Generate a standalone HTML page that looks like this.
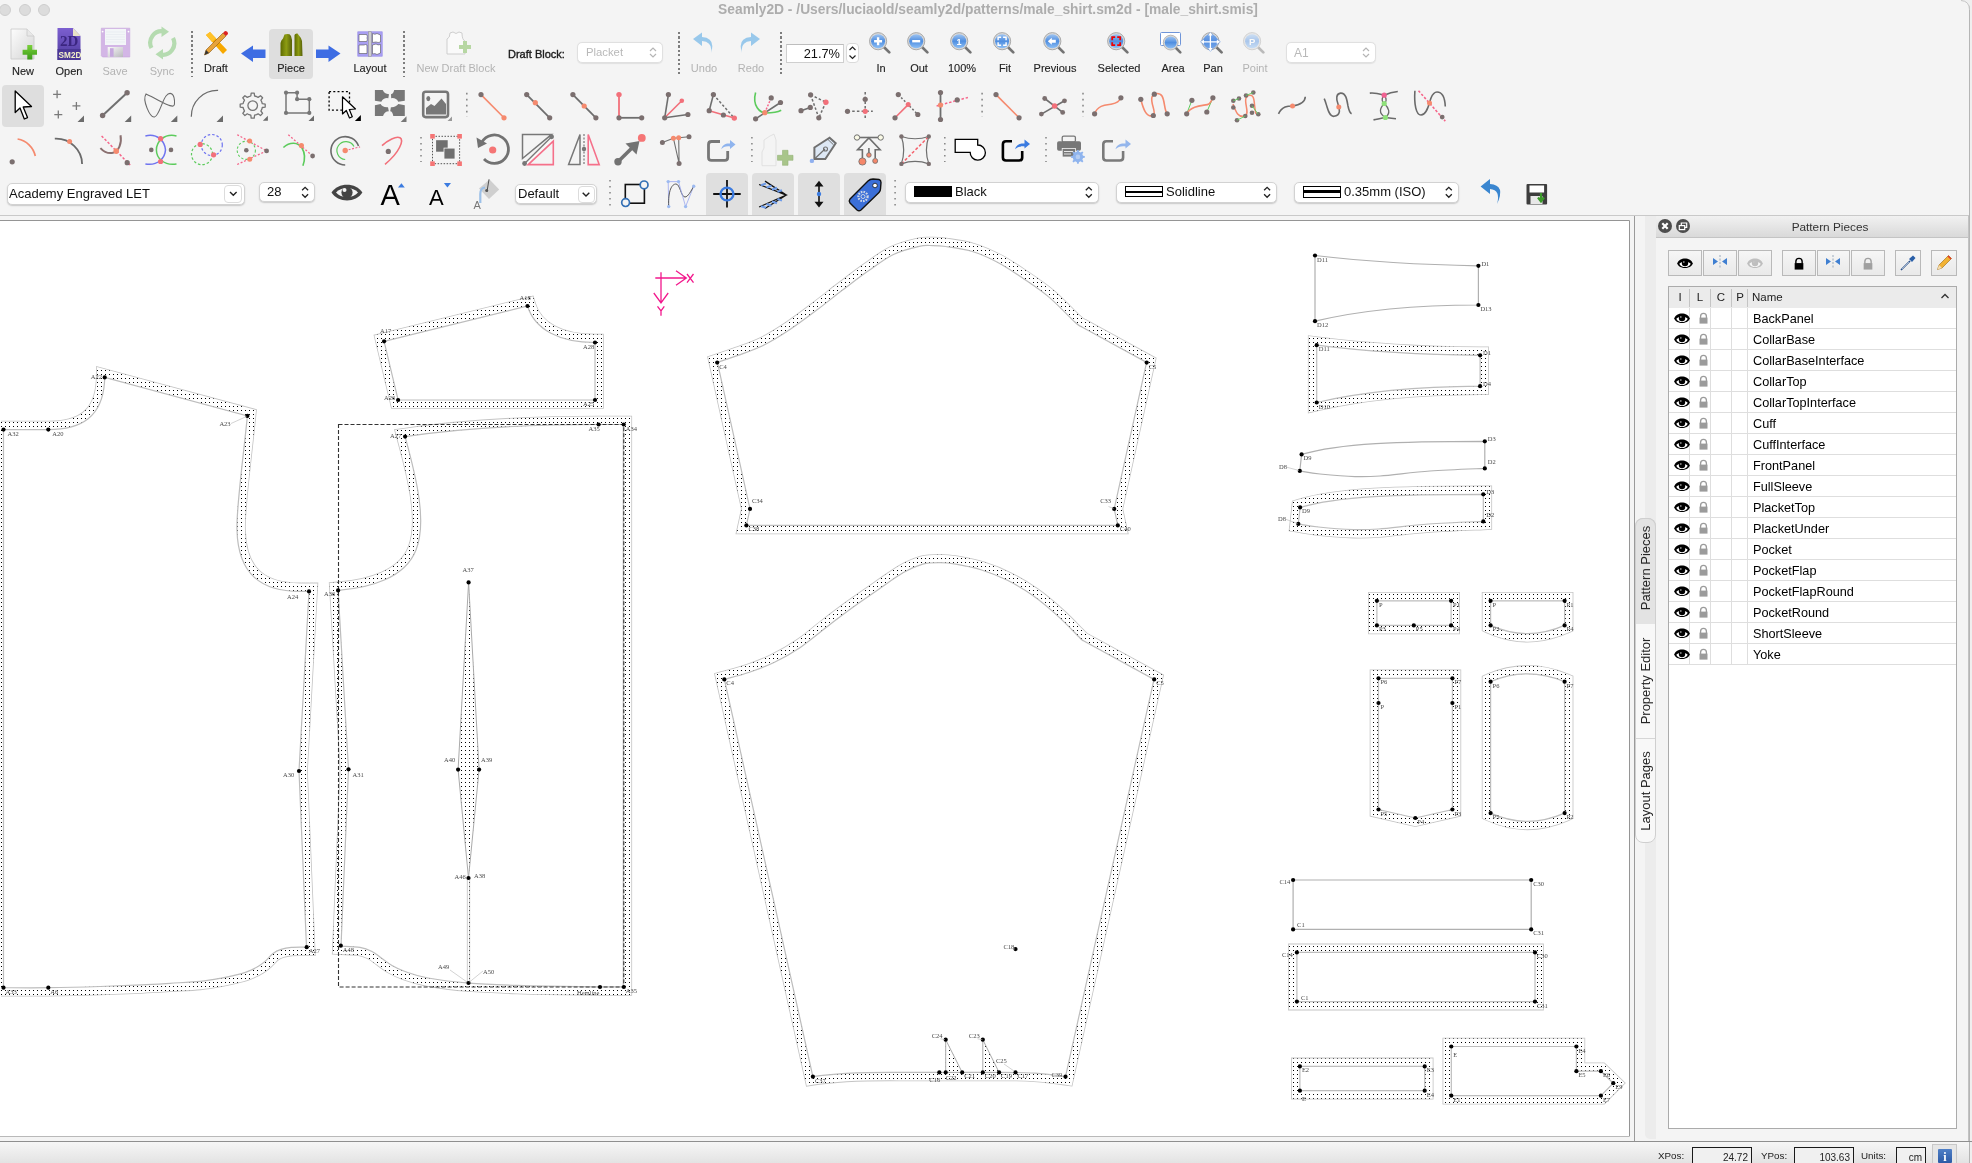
<!DOCTYPE html>
<html><head><meta charset="utf-8"><title>Seamly2D</title>
<style>
*{box-sizing:border-box;margin:0;padding:0}
html,body{width:1972px;height:1163px;overflow:hidden;background:#f4f4f4;font-family:"Liberation Sans",sans-serif;color:#1f1f1f}
.abs{position:absolute}
body>div,body>svg{will-change:transform}
.lbl{position:absolute;font-size:11px;text-align:center;white-space:nowrap;color:#262626}
.gray{color:#b4b4b4}
.sep{position:absolute;width:2px;border-left:2px dotted #8a8a8a}
.combo{position:absolute;background:#fff;border:1px solid #d6d6d6;border-radius:5px;box-shadow:0 1px 1px rgba(0,0,0,.12);font-size:13px;white-space:nowrap}
</style></head>
<body>
<div class="abs" style="left:-1px;top:4px;width:12px;height:12px;border-radius:50%;background:#dcdcdc;border:1px solid #cdcdcd"></div>
<div class="abs" style="left:18.5px;top:4px;width:12px;height:12px;border-radius:50%;background:#dcdcdc;border:1px solid #cdcdcd"></div>
<div class="abs" style="left:38px;top:4px;width:12px;height:12px;border-radius:50%;background:#dcdcdc;border:1px solid #cdcdcd"></div>
<div class="abs" style="left:0;top:2.3px;width:1972px;text-align:center;font-size:13.8px;font-weight:bold;color:#adadad;padding-left:4px">Seamly2D - /Users/luciaold/seamly2d/patterns/male_shirt.sm2d - [male_shirt.smis]</div>
<svg width="0" height="0" style="position:absolute"><defs><linearGradient id="lensg" x1="0" y1="0" x2="0" y2="1"><stop offset="0" stop-color="#9ec4f2"/><stop offset="0.5" stop-color="#4f8ee0"/><stop offset="1" stop-color="#8fc0f5"/></linearGradient><linearGradient id="pageg" x1="0" y1="0" x2="1" y2="1"><stop offset="0" stop-color="#fdfdfd"/><stop offset="1" stop-color="#d4d4d4"/></linearGradient><linearGradient id="purpg" x1="0" y1="0" x2="0" y2="1"><stop offset="0" stop-color="#7c5fd0"/><stop offset="1" stop-color="#4d3a9c"/></linearGradient><linearGradient id="greeng" x1="0" y1="0" x2="0" y2="1"><stop offset="0" stop-color="#7ad13a"/><stop offset="1" stop-color="#3a9a18"/></linearGradient><linearGradient id="oliveg" x1="0" y1="0" x2="1" y2="0"><stop offset="0" stop-color="#5d6a00"/><stop offset="0.5" stop-color="#8d9c12"/><stop offset="1" stop-color="#56600a"/></linearGradient></defs></svg>
<svg class="abs" style="left:8px;top:26px" width="32" height="36" viewBox="0 0 32 36"><path d="M3,3 H19 L26,10 V33 H3 Z" fill="url(#pageg)" stroke="#c9c9c9" stroke-width="0.8"/><path d="M19,3 V10 H26" fill="#e8e8e8" stroke="#c9c9c9" stroke-width="0.8"/><path d="M19.3,19 H24.3 V23.7 H29 V28.7 H24.3 V33.5 H19.3 V28.7 H14.6 V23.7 H19.3 Z" fill="url(#greeng)"/></svg>
<div class="abs" style="left:-27.2px;top:64.5px;width:100px;text-align:center;font-size:11px;color:#222;white-space:nowrap;-webkit-text-stroke:0.12px #222">New</div>
<svg class="abs" style="left:55px;top:26px" width="30" height="36" viewBox="0 0 30 36"><path d="M2.5,2 H18 L25.5,10 V34 H2.5 Z" fill="url(#purpg)"/><path d="M18,2 V10 H25.5 Z" fill="#e9e3c8"/><text x="5" y="20" font-family="Liberation Serif" font-weight="bold" font-size="15" fill="#3b2680">2D</text><rect x="2.5" y="23" width="23" height="11" fill="#4a3796"/><text x="3.6" y="32" font-family="Liberation Sans" font-weight="bold" font-size="8.2" fill="#f2efc8">SM2D</text></svg>
<div class="abs" style="left:19.299999999999997px;top:64.5px;width:100px;text-align:center;font-size:11px;color:#222;white-space:nowrap;-webkit-text-stroke:0.12px #222">Open</div>
<svg class="abs" style="left:100px;top:26px" width="32" height="34" viewBox="0 0 32 34"><defs><linearGradient id="shut" x1="0" y1="0" x2="1" y2="1"><stop offset="0" stop-color="#fafafa"/><stop offset="1" stop-color="#b9b9bd"/></linearGradient></defs><path d="M1.3,2.2 H29.8 V31 H2.5 L1.3,29.8 Z" fill="#d3b6e6" stroke="#c6a6dc" stroke-width="0.6"/><rect x="5" y="3" width="21" height="16" fill="#f3f6f8"/><path d="M6,6 H25 M6,8.5 H25 M6,11 H25 M6,13.5 H25 M6,16 H25" stroke="#e4eaee" stroke-width="0.6"/><circle cx="2.6" cy="5.6" r="0.9" fill="#fff"/><circle cx="28.5" cy="5.6" r="0.9" fill="#fff"/><rect x="7.7" y="21" width="15.3" height="10" fill="url(#shut)"/><rect x="10" y="22.2" width="3.6" height="8.6" fill="#c6a8de"/></svg>
<div class="abs" style="left:65.3px;top:64.5px;width:100px;text-align:center;font-size:11px;color:#b3b3b3;white-space:nowrap">Save</div>
<svg class="abs" style="left:146px;top:26px" width="32" height="34" viewBox="0 0 32 34"><path d="M5.5,22 A11.5,11.5 0 0 1 18,5.5" fill="none" stroke="#b5dbb0" stroke-width="4.2"/><path d="M15.5,0.5 L23,5.8 L15.5,11 Z" fill="#b5dbb0"/><path d="M27,12 A11.5,11.5 0 0 1 14.5,28.5" fill="none" stroke="#b5dbb0" stroke-width="4.2"/><path d="M17,23 L9.5,28.3 L17,33.5 Z" fill="#b5dbb0"/></svg>
<div class="abs" style="left:111.80000000000001px;top:64.5px;width:100px;text-align:center;font-size:11px;color:#b3b3b3;white-space:nowrap">Sync</div>
<div class="abs" style="left:191px;top:31px;width:2px;height:46px;background:repeating-linear-gradient(#7d7d7d 0 2px,transparent 2px 4.5px)"></div>
<svg class="abs" style="left:202px;top:30px" width="28" height="28" viewBox="0 0 28 28"><path d="M4,5 L8,2 L25,20 L21,24 Z" fill="#f7a800"/><path d="M4,5 L8,2 L14,8.5 L10,12Z" fill="#ffc229"/><path d="M2.5,25 L4,20 L21,3 L24,6 L7,23 Z" fill="#e7a33a" stroke="#8e5a12" stroke-width="0.6"/><path d="M21,3 L23,1 Q26,1 26,4 L24,6Z" fill="#d22"/><path d="M2.5,25 L4,20 L7,23Z" fill="#333"/></svg>
<div class="abs" style="left:166.3px;top:62px;width:100px;text-align:center;font-size:11px;color:#222;white-space:nowrap;-webkit-text-stroke:0.12px #222">Draft</div>
<svg class="abs" style="left:240px;top:45px" width="27" height="18" viewBox="0 0 27 18"><path d="M1,8.5 L13,0.5 V4.5 H25.5 V13 H13 V17 Z" fill="#3e6de3"/></svg>
<div class="abs" style="left:269px;top:29px;width:44px;height:50px;background:#dedede;border-radius:4px"></div>
<svg class="abs" style="left:278px;top:32px" width="28" height="26" viewBox="0 0 28 26"><path d="M2.5,24 V11 Q3,8 5,6.5 L6.5,2.5 Q9,1.5 11.5,2.3 L13,4 Q14.5,8 14,12 V24 Z" fill="url(#oliveg)"/><path d="M16.5,24 V3 Q17,1.2 19.5,1.5 L21,3.5 Q23.5,6 24,9 L24.5,24 Z" fill="url(#oliveg)"/></svg>
<div class="abs" style="left:240.8px;top:62px;width:100px;text-align:center;font-size:11px;color:#222;white-space:nowrap;-webkit-text-stroke:0.12px #222">Piece</div>
<svg class="abs" style="left:315px;top:45px" width="27" height="18" viewBox="0 0 27 18"><path d="M25.5,8.5 L13.5,0.5 V4.5 H1 V13 H13.5 V17 Z" fill="#3e6de3"/></svg>
<svg class="abs" style="left:356px;top:30px" width="28" height="28" viewBox="0 0 28 28"><rect x="1.8" y="1.8" width="24.4" height="24.4" fill="#a99ff3" stroke="#8d82e6" stroke-width="0.6"/><path d="M3,4.5 H10.5 Q12,6 11,8 Q12,10 10.5,11.5 H3Z" fill="#fff" stroke="#555" stroke-width="0.6"/><path d="M3,15 H8 Q9.5,14 11,15 V23.5 H3Z" fill="#fff" stroke="#555" stroke-width="0.6"/><path d="M16.5,3.5 Q19,5 21,3.5 L24.5,5 V12 Q22,13 20,12 L16.5,12.5Z" fill="#fff" stroke="#555" stroke-width="0.6"/><path d="M16.5,15 L20,14 Q22,15.5 24.5,14.5 V23 L21,24.5 Q19,23 16.5,24Z" fill="#fff" stroke="#555" stroke-width="0.6"/><rect x="12.4" y="1.8" width="3" height="24.4" fill="#cfcfcf" stroke="#8a8a8a" stroke-width="0.5"/></svg>
<div class="abs" style="left:319.7px;top:62px;width:100px;text-align:center;font-size:11px;color:#222;white-space:nowrap;-webkit-text-stroke:0.12px #222">Layout</div>
<div class="abs" style="left:403px;top:31px;width:2px;height:46px;background:repeating-linear-gradient(#7d7d7d 0 2px,transparent 2px 4.5px)"></div>
<svg class="abs" style="left:444px;top:30px" width="28" height="28" viewBox="0 0 28 28"><path d="M3,24 V9 Q6,8 6,3 L9,2 Q12,5 15,2 L18,3 Q18,10 21,11 V24 Z" fill="#fafafa" stroke="#c9c9c9" stroke-width="0.9"/><path d="M15,15 H19 V11 H23 V15 H27 V19 H23 V23 H19 V19 H15Z" fill="#b7d7a3"/></svg>
<div class="abs" style="left:405.9px;top:62px;width:100px;text-align:center;font-size:11px;color:#b3b3b3;white-space:nowrap">New Draft Block</div>
<div class="abs" style="left:508px;top:48px;font-size:11px;color:#1a1a1a;-webkit-text-stroke:0.35px #1a1a1a">Draft Block:</div>
<div class="combo" style="left:577px;top:42px;width:86px;height:21px;border-color:#e0e0e0;box-shadow:0 0.5px 1px rgba(0,0,0,.08)"></div>
<div class="abs" style="left:585.5px;top:46px;font-size:11.3px;color:#b9b9b9">Placket</div>
<svg class="abs" style="left:648px;top:45px" width="10" height="15" viewBox="0 0 10 15"><path d="M2,6 L5,3 L8,6 M2,9 L5,12 L8,9" fill="none" stroke="#b5b5b5" stroke-width="1.2"/></svg>
<div class="abs" style="left:678px;top:32px;width:2px;height:45px;background:repeating-linear-gradient(#7d7d7d 0 2px,transparent 2px 4.5px)"></div>
<svg class="abs" style="left:692px;top:32px" width="22" height="24" viewBox="0 0 22 24"><path d="M19,21 Q21,10 10,9 V14 L1,7 L10,0.5 V5 Q24,6 19,21Z" fill="#8ec3ea" opacity="0.9"/></svg>
<div class="abs" style="left:654.2px;top:62px;width:100px;text-align:center;font-size:11px;color:#b3b3b3;white-space:nowrap">Undo</div>
<svg class="abs" style="left:739px;top:32px" width="22" height="24" viewBox="0 0 22 24"><path d="M3,21 Q1,10 12,9 V14 L21,7 L12,0.5 V5 Q-2,6 3,21Z" fill="#8ec3ea" opacity="0.9"/></svg>
<div class="abs" style="left:700.5px;top:62px;width:100px;text-align:center;font-size:11px;color:#b3b3b3;white-space:nowrap">Redo</div>
<div class="abs" style="left:780px;top:32px;width:2px;height:45px;background:repeating-linear-gradient(#7d7d7d 0 2px,transparent 2px 4.5px)"></div>
<div class="abs" style="left:786px;top:44px;width:58px;height:19px;background:#fff;border:1px solid #cfcfcf;border-top-color:#bdbdbd"></div>
<div class="abs" style="left:786px;top:46px;width:54px;text-align:right;font-size:12.8px;color:#111">21.7%</div>
<div class="abs" style="left:846px;top:43px;width:13px;height:20px;background:#fff;border:1px solid #dadada;border-radius:4px"></div>
<svg class="abs" style="left:847px;top:44px" width="11" height="18" viewBox="0 0 11 18"><path d="M2.5,6 L5.5,3 L8.5,6 M2.5,11.5 L5.5,14.5 L8.5,11.5" fill="none" stroke="#222" stroke-width="1.2"/></svg>
<div class="abs" style="left:830.6px;top:62px;width:100px;text-align:center;font-size:11px;color:#222;white-space:nowrap;-webkit-text-stroke:0.12px #222">In</div>
<div class="abs" style="left:868.7px;top:62px;width:100px;text-align:center;font-size:11px;color:#222;white-space:nowrap;-webkit-text-stroke:0.12px #222">Out</div>
<div class="abs" style="left:911.7px;top:62px;width:100px;text-align:center;font-size:11px;color:#222;white-space:nowrap;-webkit-text-stroke:0.12px #222">100%</div>
<div class="abs" style="left:954.6px;top:62px;width:100px;text-align:center;font-size:11px;color:#222;white-space:nowrap;-webkit-text-stroke:0.12px #222">Fit</div>
<div class="abs" style="left:1004.8px;top:62px;width:100px;text-align:center;font-size:11px;color:#222;white-space:nowrap;-webkit-text-stroke:0.12px #222">Previous</div>
<div class="abs" style="left:1068.7px;top:62px;width:100px;text-align:center;font-size:11px;color:#222;white-space:nowrap;-webkit-text-stroke:0.12px #222">Selected</div>
<div class="abs" style="left:1123.4px;top:62px;width:100px;text-align:center;font-size:11px;color:#222;white-space:nowrap;-webkit-text-stroke:0.12px #222">Area</div>
<div class="abs" style="left:1162.9px;top:62px;width:100px;text-align:center;font-size:11px;color:#222;white-space:nowrap;-webkit-text-stroke:0.12px #222">Pan</div>
<div class="abs" style="left:1204.6px;top:62px;width:100px;text-align:center;font-size:11px;color:#b3b3b3;white-space:nowrap">Point</div>
<svg class="abs" style="left:0;top:0" width="1400" height="80" viewBox="0 0 1400 80">
<g><path d="M883.1,46.2 L889.3000000000001,52.400000000000006" stroke="#747474" stroke-width="2.7" stroke-linecap="round"/><circle cx="878.1" cy="41.2" r="8.6" fill="#d8d8d8" stroke="#a9a9a9" stroke-width="1"/><circle cx="878.1" cy="41.2" r="7" fill="url(#lensg)"/><path d="M874.1,41.2 h8 M878.1,37.2 v8" stroke="#fff" stroke-width="2.4"/></g>
<g><path d="M921.2,46.2 L927.4000000000001,52.400000000000006" stroke="#747474" stroke-width="2.7" stroke-linecap="round"/><circle cx="916.2" cy="41.2" r="8.6" fill="#d8d8d8" stroke="#a9a9a9" stroke-width="1"/><circle cx="916.2" cy="41.2" r="7" fill="url(#lensg)"/><path d="M912.2,41.2 h8" stroke="#fff" stroke-width="2.4"/></g>
<g><path d="M964.2,46.2 L970.4000000000001,52.400000000000006" stroke="#747474" stroke-width="2.7" stroke-linecap="round"/><circle cx="959.2" cy="41.2" r="8.6" fill="#d8d8d8" stroke="#a9a9a9" stroke-width="1"/><circle cx="959.2" cy="41.2" r="7" fill="url(#lensg)"/><text x="956.5" y="44.5" font-size="9" font-weight="bold" font-family="Liberation Sans" fill="#fff">1</text></g>
<g><path d="M1007.1,46.2 L1013.3000000000001,52.400000000000006" stroke="#747474" stroke-width="2.7" stroke-linecap="round"/><circle cx="1002.1" cy="41.2" r="8.6" fill="#d8d8d8" stroke="#a9a9a9" stroke-width="1"/><circle cx="1002.1" cy="41.2" r="7" fill="url(#lensg)"/><path d="M998.1,40.2 v-3 h3 M1006.1,40.2 v-3 h-3 M998.1,42.2 v3 h3 M1006.1,42.2 v3 h-3" stroke="#fff" stroke-width="1.4" fill="none"/></g>
<g><path d="M1057.3,46.2 L1063.5,52.400000000000006" stroke="#747474" stroke-width="2.7" stroke-linecap="round"/><circle cx="1052.3" cy="41.2" r="8.6" fill="#d8d8d8" stroke="#a9a9a9" stroke-width="1"/><circle cx="1052.3" cy="41.2" r="7" fill="url(#lensg)"/><path d="M1047.8,41.2 l4,-3.5 v2 h4 v3 h-4 v2 z" fill="#fff"/></g>
<g><path d="M1121.2,46.2 L1127.4,52.400000000000006" stroke="#747474" stroke-width="2.7" stroke-linecap="round"/><circle cx="1116.2" cy="41.2" r="8.6" fill="#d8d8d8" stroke="#a9a9a9" stroke-width="1"/><circle cx="1116.2" cy="41.2" r="7" fill="url(#lensg)"/><path d="M1112.2,40.2 v-3 h3 M1120.2,40.2 v-3 h-3 M1112.2,42.2 v3 h3 M1120.2,42.2 v3 h-3" stroke="#e00" stroke-width="1.8" fill="none"/></g>
<rect x="1160.5" y="32.5" width="20" height="13" rx="1" fill="#fff" stroke="#6f95d8" stroke-width="1"/>
<path d="M1175.5,47.5 L1180.3,52.3" stroke="#747474" stroke-width="2.6" stroke-linecap="round"/><circle cx="1170.7" cy="42.6" r="7.4" fill="#d8d8d8" stroke="#a9a9a9" stroke-width="0.8"/><circle cx="1170.7" cy="42.6" r="6" fill="url(#lensg)"/>
<g><path d="M1215.4,46.2 L1221.6000000000001,52.400000000000006" stroke="#747474" stroke-width="2.7" stroke-linecap="round"/><circle cx="1210.4" cy="41.2" r="8.6" fill="#d8d8d8" stroke="#a9a9a9" stroke-width="1"/><circle cx="1210.4" cy="41.2" r="7" fill="url(#lensg)"/></g>
<path d="M1210.4,32 L1220.8,41.8 L1210.4,51.8 L1200,41.8 Z" fill="#5b8fe0" opacity="0.55"/><path d="M1210.4,34 V49.5 M1202.5,41.8 H1218.3" stroke="#fff" stroke-width="1.3"/><path d="M1208.3,35.5 L1210.4,32.3 L1212.5,35.5 Z M1208.3,48 L1210.4,51.2 L1212.5,48 Z M1204,39.7 L1200.8,41.8 L1204,43.9 Z M1216.8,39.7 L1220,41.8 L1216.8,43.9 Z" fill="#fff"/>
<g opacity="0.45"><path d="M1257.1,46.2 L1263.3,52.400000000000006" stroke="#747474" stroke-width="2.7" stroke-linecap="round"/><circle cx="1252.1" cy="41.2" r="8.6" fill="#d8d8d8" stroke="#a9a9a9" stroke-width="1"/><circle cx="1252.1" cy="41.2" r="7" fill="url(#lensg)"/><text x="1248.8999999999999" y="44.5" font-size="9.5" font-weight="bold" font-family="Liberation Sans" fill="#fff">P</text></g>
</svg>
<div class="combo" style="left:1286px;top:42px;width:90px;height:21px;border-color:#e0e0e0;box-shadow:0 0.5px 1px rgba(0,0,0,.08)"></div>
<div class="abs" style="left:1294px;top:46px;font-size:12px;color:#b9b9b9">A1</div>
<svg class="abs" style="left:1361px;top:45px" width="10" height="15" viewBox="0 0 10 15"><path d="M2,6 L5,3 L8,6 M2,9 L5,12 L8,9" fill="none" stroke="#b5b5b5" stroke-width="1.2"/></svg>
<svg class="abs" style="left:0;top:0" width="1480" height="175" viewBox="0 0 1480 175">
<rect x="2" y="85" width="42" height="42" rx="4" fill="#dedede"/>
<path d="M15.2,91 L15.2,112.5 L20,108 L24.3,119 L27.5,117.6 L23.2,107 L31.5,106.5 Z" fill="#fff" stroke="#000" stroke-width="1.3" stroke-linejoin="round"/>
<path d="M53.1,94.3 h8 M57.1,90.3 v8" stroke="#7a7a7a" stroke-width="1.3"/>
<path d="M72.4,105.9 h8 M76.4,101.9 v8" stroke="#7a7a7a" stroke-width="1.3"/>
<path d="M54.3,114.6 h8 M58.3,110.6 v8" stroke="#7a7a7a" stroke-width="1.3"/>
<path d="M77.5,121.9 L84,121.9 L84,115.4 Z" fill="#6c6c6c"/>
<path d="M102.6,115.5 L127.1,92.7" stroke="#707070" stroke-width="2" fill="none"/>
<circle cx="102.6" cy="115.5" r="2.7" fill="#7b6f6f"/>
<circle cx="127.1" cy="92.7" r="2.7" fill="#7b6f6f"/>
<path d="M124.69999999999999,121.9 L131.2,121.9 L131.2,115.4 Z" fill="#6c6c6c"/>
<path d="M146,94 C142,100 150,118 154.5,117 C159,116 162,101 166,96 C170,91 175,93 174.5,104 C174,110 163,102 146,94 Z" fill="none" stroke="#6a6a6a" stroke-width="1.1"/>
<path d="M170.8,121.9 L177.3,121.9 L177.3,115.4 Z" fill="#6c6c6c"/>
<path d="M191.3,116.7 A26,26 0 0 1 218.1,90.4" fill="none" stroke="#6a6a6a" stroke-width="1.2"/>
<path d="M216.5,121.9 L223,121.9 L223,115.4 Z" fill="#6c6c6c"/>
<path d="M262.3,103.7 L265.2,104.1 L265.2,107.1 L262.3,107.5 L261.8,109.3 L260.9,111.0 L262.6,113.4 L260.5,115.5 L258.1,113.8 L256.5,114.6 L254.6,115.2 L254.2,118.1 L251.2,118.1 L250.8,115.2 L249.0,114.7 L247.3,113.8 L244.9,115.5 L242.8,113.4 L244.5,111.0 L243.7,109.4 L243.1,107.5 L240.2,107.1 L240.2,104.1 L243.1,103.7 L243.6,101.9 L244.5,100.2 L242.8,97.8 L244.9,95.7 L247.3,97.4 L248.9,96.6 L250.8,96.0 L251.2,93.1 L254.2,93.1 L254.6,96.0 L256.4,96.5 L258.1,97.4 L260.5,95.7 L262.6,97.8 L260.9,100.2 L261.7,101.8Z" fill="none" stroke="#757575" stroke-width="1.3" stroke-linejoin="round"/><circle cx="252.7" cy="105.6" r="4.8" fill="none" stroke="#757575" stroke-width="1.3"/>
<path d="M262.9,120.7 L267.9,120.7 L267.9,115.7 Z" fill="#6c6c6c"/>
<path d="M286,92.7 L297.1,92.7 L297.1,99.2 L309.3,99.2 L309.3,112.9 L286,112.9 Z" fill="none" stroke="#777" stroke-width="1.5"/>
<circle cx="286" cy="92.7" r="2.1" fill="#777"/>
<circle cx="297.1" cy="92.7" r="2.1" fill="#777"/>
<circle cx="297.1" cy="99.2" r="2.1" fill="#777"/>
<circle cx="309.3" cy="99.2" r="2.1" fill="#777"/>
<circle cx="309.3" cy="112.9" r="2.1" fill="#777"/>
<circle cx="286" cy="112.9" r="2.1" fill="#777"/>
<path d="M308.5,121 L314,121 L314,115.5 Z" fill="#6c6c6c"/>
<rect x="329.1" y="91.6" width="20.4" height="18.6" fill="none" stroke="#000" stroke-width="1.3" stroke-dasharray="2,2.2"/>
<path d="M342.5,96.8 L342.5,114 L346.3,110.5 L349.5,118 L352.3,116.7 L349.3,109.5 L355.5,109 Z" fill="#fff" stroke="#000" stroke-width="1.2" stroke-linejoin="round"/>
<path d="M354.9,121 L360.9,121 L360.9,115 Z" fill="#000"/>
<path d="M374.9,89.9 H382.7 Q384,93.5 389,94.2 L388.3,98.2 Q383.5,97.5 381.3,101.7 L374.9,100.7 Z" fill="#777"/>
<path d="M394.2,89.9 H404.8 V100.7 L398.3,101.7 Q396,97.5 391.2,98.2 L391,94.2 Q393.5,93.5 394.2,89.9 Z" fill="#777"/>
<path d="M374.9,105.2 L380.6,104.1 Q382,107.5 388,107.2 L388.8,111.3 Q384.5,111.5 383,115.9 H374.9 Z" fill="#777"/>
<path d="M398.3,104.1 L404.8,105.2 V115.9 H393.3 Q392.5,111.5 390.2,111.3 L390.9,107.2 Q396,107.5 398.3,104.1 Z" fill="#777"/>
<path d="M400.7,122 L406.5,122 L406.5,116.2 Z" fill="#777"/>
<rect x="423.2" y="91.7" width="24.8" height="25.4" rx="2.5" fill="none" stroke="#777" stroke-width="2.6"/>
<path d="M426,114.5 V108 L431,104 L434.5,106 L441.5,98.5 L446,104 V114.5 Z" fill="#777"/><ellipse cx="428.3" cy="98.6" rx="2" ry="2.6" fill="#777"/>
<path d="M447.5,121 L452,121 L452,116.5 Z" fill="#999"/>
<path d="M466.8,92.8 V117" stroke="#8a8a8a" stroke-width="1.6" stroke-dasharray="1.6,4.4"/>
<path d="M481,94.6 L504,117.8" stroke="#f58a6e" stroke-width="1.6" fill="none"/>
<circle cx="481" cy="94.6" r="2.6" fill="#7b6f6f"/>
<circle cx="504" cy="117.8" r="2.6" fill="#f58a6e"/>
<path d="M526.7,94.6 L549.7,117.8" stroke="#6e6e6e" stroke-width="1.8" fill="none"/>
<circle cx="526.7" cy="94.6" r="2.6" fill="#7b6f6f"/>
<circle cx="549.7" cy="117.8" r="2.6" fill="#7b6f6f"/>
<circle cx="535.3" cy="102.7" r="2.6" fill="#f58a6e"/>
<path d="M572.9,94.6 L595.9,117.8" stroke="#6e6e6e" stroke-width="1.8" fill="none"/>
<circle cx="572.9" cy="94.6" r="2.6" fill="#7b6f6f"/>
<circle cx="595.9" cy="117.8" r="2.6" fill="#7b6f6f"/>
<circle cx="584.2" cy="106" r="2.6" fill="#f58a6e"/>
<path d="M619,94.6 L619,117.8" stroke="#f2707a" stroke-width="1.8" fill="none"/>
<path d="M619,117.8 L641.7,117.8" stroke="#6e6e6e" stroke-width="1.8" fill="none"/>
<circle cx="619" cy="94.6" r="2.7" fill="#f2707a"/>
<circle cx="619" cy="117.8" r="2.6" fill="#7b6f6f"/>
<circle cx="641.7" cy="117.8" r="2.6" fill="#7b6f6f"/>
<path d="M664.7,117.8 L668.4,94.6" stroke="#6e6e6e" stroke-width="1.6" fill="none"/>
<path d="M664.7,117.8 L687.9,114.5" stroke="#6e6e6e" stroke-width="1.6" fill="none"/>
<path d="M664.7,117.8 L681.8,100.8" stroke="#f2707a" stroke-width="1.6" fill="none"/>
<circle cx="668.4" cy="94.6" r="2.6" fill="#7b6f6f"/>
<circle cx="664.7" cy="117.8" r="2.6" fill="#7b6f6f"/>
<circle cx="687.9" cy="114.5" r="2.6" fill="#7b6f6f"/>
<circle cx="681.8" cy="100.8" r="2.3" fill="#f2707a"/>
<path d="M713.4,94.6 L709.2,110.7" stroke="#6e6e6e" stroke-width="1.6" fill="none"/>
<path d="M709.2,110.7 L734.3,118.1" stroke="#f2707a" stroke-width="1.6" fill="none"/>
<path d="M713.4,94.6 L734.3,118.1" stroke="#6e6e6e" stroke-width="1.5" stroke-dasharray="2.5,2" fill="none"/>
<circle cx="713.4" cy="94.6" r="2.6" fill="#7b6f6f"/>
<circle cx="709.2" cy="110.7" r="2.6" fill="#7b6f6f"/>
<circle cx="723.4" cy="115" r="2.6" fill="#7b6f6f"/>
<circle cx="734.3" cy="118.1" r="2.7" fill="#f2707a"/>
<path d="M755.6,92.5 C752,106 760,113 766,113 C772,113 778,112 781.2,110.3" fill="none" stroke="#5ccb5c" stroke-width="1.6"/>
<path d="M755.6,118.8 L780.5,102.5" stroke="#6e6e6e" stroke-width="1.6" fill="none"/>
<path d="M764.8,112.7 L771.2,97.9" stroke="#f5668a" stroke-width="1.5" stroke-dasharray="2,1.5" fill="none"/>
<circle cx="755.6" cy="118.8" r="2.6" fill="#7b6f6f"/>
<circle cx="780.5" cy="102.5" r="2.6" fill="#7b6f6f"/>
<circle cx="771.2" cy="97.9" r="2.6" fill="#7b6f6f"/>
<circle cx="764.8" cy="112.7" r="2.6" fill="#f58a6e"/>
<path d="M810.6,94.8 L825.9,102.2" stroke="#6e6e6e" stroke-width="1.5" stroke-dasharray="2.5,2" fill="none"/>
<path d="M825.9,102.2 L818.8,117.8" stroke="#6e6e6e" stroke-width="1.5" stroke-dasharray="2.5,2" fill="none"/>
<path d="M810.6,94.8 L818.8,117.8" stroke="#6e6e6e" stroke-width="1.5" stroke-dasharray="2.5,2" fill="none"/>
<path d="M801,110.7 L810.3,107.4" stroke="#6e6e6e" stroke-width="1.6" fill="none"/>
<circle cx="810.6" cy="94.8" r="2.6" fill="#7b6f6f"/>
<circle cx="818.8" cy="117.8" r="2.6" fill="#7b6f6f"/>
<circle cx="810.3" cy="107.4" r="2.6" fill="#7b6f6f"/>
<circle cx="801" cy="110.7" r="2.6" fill="#7b6f6f"/>
<circle cx="825.9" cy="102.2" r="2.7" fill="#f2707a"/>
<path d="M865.2,92 L865.2,118.5" stroke="#6e6e6e" stroke-width="1.5" stroke-dasharray="2.5,2.2" fill="none"/>
<path d="M847.5,111.3 L872.8,111.3" stroke="#6e6e6e" stroke-width="1.5" stroke-dasharray="2.5,2.2" fill="none"/>
<circle cx="847.5" cy="111.3" r="2.6" fill="#7b6f6f"/>
<circle cx="865.2" cy="99.3" r="2.6" fill="#7b6f6f"/>
<circle cx="865.2" cy="111.3" r="2.6" fill="#f2707a"/>
<path d="M898.3,94.6 L917.8,114.5" stroke="#6e6e6e" stroke-width="1.5" stroke-dasharray="2,2" fill="none"/>
<path d="M908.2,104.6 L895,117.8" stroke="#f2707a" stroke-width="1.6" fill="none"/>
<circle cx="898.3" cy="94.6" r="2.6" fill="#7b6f6f"/>
<circle cx="917.8" cy="114.5" r="2.6" fill="#7b6f6f"/>
<circle cx="895" cy="117.8" r="2.6" fill="#7b6f6f"/>
<circle cx="908.2" cy="104.6" r="2.5" fill="#f2707a"/>
<path d="M940.5,92.5 L940.5,119.5" stroke="#6e6e6e" stroke-width="1.8" fill="none"/>
<path d="M936.6,106 L967.9,97.5" stroke="#f5668a" stroke-width="1.5" stroke-dasharray="2.5,1.8" fill="none"/>
<circle cx="940.5" cy="92.5" r="2.6" fill="#7b6f6f"/>
<circle cx="940.5" cy="119.5" r="2.6" fill="#7b6f6f"/>
<circle cx="957.2" cy="99.9" r="2.6" fill="#7b6f6f"/>
<circle cx="940.5" cy="105" r="2.6" fill="#f58a6e"/>
<path d="M982.1,92.8 V117" stroke="#8a8a8a" stroke-width="1.6" stroke-dasharray="1.6,4.4"/>
<path d="M996,94.6 L1019.1,117.8" stroke="#f58a6e" stroke-width="1.6" fill="none"/>
<circle cx="996" cy="94.6" r="2.6" fill="#7b6f6f"/>
<circle cx="1019.1" cy="117.8" r="2.6" fill="#7b6f6f"/>
<path d="M1041.4,114.1 L1064.5,100.8" stroke="#6e6e6e" stroke-width="1.6" fill="none"/>
<path d="M1044.7,98.5 L1062.7,112.4" stroke="#6e6e6e" stroke-width="1.6" fill="none"/>
<circle cx="1041.4" cy="114.1" r="2.4" fill="#7b6f6f"/>
<circle cx="1064.5" cy="100.8" r="2.4" fill="#7b6f6f"/>
<circle cx="1044.7" cy="98.5" r="2.4" fill="#7b6f6f"/>
<circle cx="1062.7" cy="112.4" r="2.4" fill="#7b6f6f"/>
<circle cx="1054.6" cy="106" r="2.8" fill="#f2707a"/>
<path d="M1083,92.8 V117" stroke="#8a8a8a" stroke-width="1.6" stroke-dasharray="1.6,4.4"/>
<path d="M1094.6,113.8 C1098,104 1108,105 1112,104 C1118,103 1120,100 1120.9,97.8" fill="none" stroke="#f58a6e" stroke-width="1.6"/>
<circle cx="1094.6" cy="113.8" r="2.6" fill="#7b6f6f"/>
<circle cx="1120.9" cy="97.8" r="2.6" fill="#7b6f6f"/>
<path d="M1140.8,99.3 C1143,108 1146,118 1153.3,115.5 C1157,113 1150,103 1152,97 C1154,92 1160,93 1162,96 C1165,101 1164,110 1167.2,113.8" fill="none" stroke="#f58a6e" stroke-width="1.6"/>
<circle cx="1140.8" cy="99.3" r="2.6" fill="#7b6f6f"/>
<circle cx="1153.3" cy="115.5" r="2.6" fill="#7b6f6f"/>
<circle cx="1154.3" cy="94.2" r="2.6" fill="#7b6f6f"/>
<circle cx="1167.2" cy="113.8" r="2.6" fill="#7b6f6f"/>
<path d="M1186.7,113.8 L1191.9,100.3" stroke="#5ccb5c" stroke-width="1" fill="none"/>
<path d="M1206.8,112 L1212.9,97.8" stroke="#5ccb5c" stroke-width="1" fill="none"/>
<path d="M1186.7,113.8 C1192,104 1206,106 1209,104 C1211,102 1212,100 1212.9,97.8" fill="none" stroke="#f58a6e" stroke-width="1.6"/>
<circle cx="1186.7" cy="113.8" r="2.6" fill="#7b6f6f"/>
<circle cx="1191.9" cy="100.3" r="2.6" fill="#7b6f6f"/>
<circle cx="1206.8" cy="112" r="2.6" fill="#7b6f6f"/>
<circle cx="1212.9" cy="97.8" r="2.6" fill="#7b6f6f"/>
<path d="M1233,104 C1236,112 1238,118 1245,116 C1250,114 1244,103 1246,98 C1248,94 1252,95 1253,97 C1255,100 1254,108 1256,114" fill="none" stroke="#f58a6e" stroke-width="1.5"/>
<circle cx="1233.3" cy="100.8" r="2.3" fill="#7b6f6f"/>
<circle cx="1233.3" cy="107.5" r="2.3" fill="#7b6f6f"/>
<circle cx="1239" cy="98.5" r="2.3" fill="#7b6f6f"/>
<circle cx="1246" cy="95.5" r="2.3" fill="#7b6f6f"/>
<circle cx="1253.3" cy="92.5" r="2.3" fill="#7b6f6f"/>
<circle cx="1252" cy="105.8" r="2.3" fill="#7b6f6f"/>
<circle cx="1245.3" cy="116" r="2.3" fill="#7b6f6f"/>
<circle cx="1252" cy="112.8" r="2.3" fill="#7b6f6f"/>
<circle cx="1258.3" cy="114.2" r="2.3" fill="#7b6f6f"/>
<circle cx="1237" cy="120.2" r="2.3" fill="#7b6f6f"/>
<path d="M1233.3,100.8 L1239,98.5" stroke="#5ccb5c" stroke-width="0.9" fill="none"/>
<path d="M1246,95.5 L1253.3,92.5" stroke="#5ccb5c" stroke-width="0.9" fill="none"/>
<path d="M1237,120.2 L1245.3,116" stroke="#5ccb5c" stroke-width="0.9" fill="none"/>
<path d="M1252,105.8 L1258.3,114.2" stroke="#5ccb5c" stroke-width="0.9" fill="none"/>
<path d="M1278.5,113.8 C1282,106 1288,106 1292.5,106 C1300,105 1305,102 1305.3,96.8" fill="none" stroke="#6a6a6a" stroke-width="1.6"/>
<circle cx="1292.5" cy="106.1" r="2.5" fill="#f58a6e"/>
<path d="M1324.2,98.6 C1327,104 1328,117 1334,116.3 C1341,115.5 1340,109 1338,104 C1336,99 1336,93.5 1340.6,93.1 C1346,92.8 1347,100 1348,106 C1349,111 1350,113 1351.6,113.8" fill="none" stroke="#6a6a6a" stroke-width="1.6"/>
<circle cx="1338.8" cy="106.9" r="2.5" fill="#f58a6e"/>
<path d="M1369.8,93.1 C1376,92.5 1380,94 1384.2,95.2 C1389,93 1393,92 1397.8,91.5 M1373.5,119.9 C1378,119 1382,118 1385.4,117.5 C1389,118 1393,118.5 1396,118.7" fill="none" stroke="#6a6a6a" stroke-width="1.6"/>
<path d="M1384.2,95.2 C1381,99 1382,102 1384.2,103.5 C1386.5,102 1387,99 1384.2,95.2 M1384.2,103.5 C1380,108 1378,113 1385.4,117.5 C1391,113 1389,108 1384.2,103.5" fill="none" stroke="#6a6a6a" stroke-width="1.3"/>
<circle cx="1384.2" cy="95.2" r="2.6" fill="#f06292"/>
<circle cx="1384.2" cy="103.5" r="2.6" fill="#8fe07a"/>
<circle cx="1385.4" cy="117.5" r="2.6" fill="#8fe07a"/>
<path d="M1414.9,90.7 C1414,104 1416,115 1421,115 C1427,115 1429,104 1431,98 C1433,93 1435,92 1437,92 C1443,92 1445,100 1445.3,106.5" fill="none" stroke="#6a6a6a" stroke-width="1.6"/>
<path d="M1418.5,90.7 L1445.3,121.1" stroke="#f5668a" stroke-width="1.6" stroke-dasharray="2.5,1.8" fill="none"/>
<circle cx="1442.2" cy="117.1" r="2.4" fill="#7b6f6f"/>
<circle cx="1429.5" cy="102.9" r="2.5" fill="#f58a6e"/>
<circle cx="12.2" cy="161.8" r="2.6" fill="#7b6f6f"/>
<path d="M17.6,139 A22,22 0 0 1 35.3,156" fill="none" stroke="#f58a6e" stroke-width="1.7"/>
<path d="M54.8,138.7 C70,138 82,150 82.1,163.9" fill="none" stroke="#6a6a6a" stroke-width="1.8"/>
<circle cx="69.6" cy="141.4" r="2.5" fill="#f58a6e"/>
<path d="M100.4,148.1 C104,152 108,153.5 112,153 C119,152 122,143 120.5,135.3" fill="none" stroke="#8a7070" stroke-width="2"/>
<path d="M101.6,135.9 L130.2,165.1" stroke="#f5668a" stroke-width="1.5" stroke-dasharray="2.5,1.8" fill="none"/>
<circle cx="127.2" cy="162.7" r="2.6" fill="#7b6f6f"/>
<circle cx="116.2" cy="151.1" r="2.8" fill="#f58a6e"/>
<path d="M145.4,135.9 C158,133 165,142 165.5,149.9 C165,158 158,166 145.4,163.9" fill="none" stroke="#6f74f0" stroke-width="1.5"/>
<path d="M176.5,135.9 C164,133 156.4,142 156.4,149.9 C156.4,158 164,166 176.5,163.9" fill="none" stroke="#5ccb5c" stroke-width="1.5"/>
<circle cx="160.6" cy="138.7" r="2.6" fill="#f2707a"/>
<circle cx="160.6" cy="161.5" r="2.6" fill="#f2707a"/>
<circle cx="151.3" cy="149.9" r="2.3" fill="#7b6f6f"/>
<circle cx="171" cy="149.9" r="2.3" fill="#7b6f6f"/>
<circle cx="202" cy="154.2" r="10.5" fill="none" stroke="#5ccb5c" stroke-width="1.2" stroke-dasharray="2.5,2"/>
<circle cx="211.8" cy="145" r="10.5" fill="none" stroke="#6f74f0" stroke-width="1.2" stroke-dasharray="2.5,2"/>
<circle cx="200.2" cy="144.4" r="2.6" fill="#f2707a"/>
<circle cx="213.6" cy="154.8" r="2.6" fill="#f2707a"/>
<circle cx="246.3" cy="150.3" r="9.1" fill="none" stroke="#5ccb5c" stroke-width="1.1" stroke-dasharray="2.3,2"/>
<path d="M237.2,134.7 L266.6,150.9" stroke="#f5668a" stroke-width="1.3" stroke-dasharray="2,1.8" fill="none"/>
<path d="M237.2,164.5 L266.6,150.9" stroke="#f5668a" stroke-width="1.3" stroke-dasharray="2,1.8" fill="none"/>
<circle cx="246.3" cy="150.3" r="2.3" fill="#7b6f6f"/>
<circle cx="266.6" cy="150.9" r="2.4" fill="#7b6f6f"/>
<circle cx="249.7" cy="141.1" r="2.5" fill="#f58a6e"/>
<circle cx="249.7" cy="159.3" r="2.5" fill="#f58a6e"/>
<path d="M283.4,147.5 C290,141.5 298,142 302,148 C305,153 305,160 302.9,165.7" fill="none" stroke="#5ccb5c" stroke-width="1.6"/>
<path d="M288.3,134.7 L312.6,156" stroke="#f5668a" stroke-width="1.3" stroke-dasharray="2,1.8" fill="none"/>
<circle cx="312.6" cy="156" r="2.4" fill="#7b6f6f"/>
<circle cx="301.4" cy="145.6" r="2.6" fill="#f58a6e"/>
<path d="M358.5,146 A14.2,14.2 0 1 0 345.2,165" fill="none" stroke="#6a6a6a" stroke-width="1.6"/>
<path d="M354,146.5 A9,9 0 1 0 345.2,159.5" fill="none" stroke="#5ccb5c" stroke-width="1.2"/>
<path d="M345.2,150.5 L360.1,146.9" stroke="#f5668a" stroke-width="1.1" stroke-dasharray="2,1.5" fill="none"/>
<circle cx="345.2" cy="150.5" r="2.7" fill="#f58a6e"/>
<path d="M382,145.6 C388,140 396,136 400,137.7 C404,140 400,152 385,164.3" fill="none" stroke="#f2707a" stroke-width="1.6"/>
<circle cx="388.3" cy="151.4" r="2.6" fill="#7b6f6f"/>
<path d="M421,137 V162" stroke="#8a8a8a" stroke-width="1.6" stroke-dasharray="1.6,4.4"/>
<rect x="432.5" y="136.3" width="27.1" height="27.4" fill="none" stroke="#555" stroke-width="1" stroke-dasharray="1.5,1.5"/>
<rect x="430.2" y="134.0" width="4.6" height="4.6" fill="#f57575"/>
<rect x="457.3" y="134.0" width="4.6" height="4.6" fill="#f57575"/>
<rect x="430.2" y="161.39999999999998" width="4.6" height="4.6" fill="#f57575"/>
<rect x="457.3" y="161.39999999999998" width="4.6" height="4.6" fill="#f57575"/>
<rect x="436.1" y="140.2" width="11.6" height="11.5" fill="#6f6f6f"/><rect x="444" y="148.1" width="11" height="10.9" fill="#6f6f6f" stroke="#f4f4f4" stroke-width="0.8"/>
<path d="M482,142 A14.2,14.2 0 1 1 484,159" fill="none" stroke="#727272" stroke-width="2.8"/>
<path d="M476.5,137.5 L478,148 L487,143.5 Z" fill="#727272"/>
<circle cx="492.7" cy="150" r="3.6" fill="#f57575"/>
<path d="M522.5,134.4 H551.6 L522.5,158.5 Z" fill="none" stroke="#777" stroke-width="1.5"/>
<path d="M524.6,163.5 L551.6,136.8" stroke="#777" stroke-width="1.3" fill="none"/>
<path d="M527,163.5 L553,139" stroke="#fff" stroke-width="0.6" fill="none"/>
<circle cx="524.6" cy="163.5" r="2.4" fill="#777"/>
<circle cx="551.6" cy="136.8" r="2.4" fill="#777"/>
<path d="M528.2,164.6 L553.3,141.1 V164.6 Z" fill="none" stroke="#f5708a" stroke-width="1.6"/>
<path d="M568.6,164.6 L580,134.4 V164.6 Z" fill="none" stroke="#777" stroke-width="1.5"/>
<path d="M584,134 L584,165" stroke="#777" stroke-width="1.2" stroke-dasharray="2,1.5" fill="none"/>
<circle cx="584" cy="149" r="2.2" fill="#777"/>
<path d="M588.2,134.4 V164.6 H599.2 Z" fill="none" stroke="#f5708a" stroke-width="1.6"/>
<path d="M618,161.8 L634,146" stroke="#727272" stroke-width="3.6" fill="none"/>
<path d="M639.5,141 L625.5,143.5 L636.5,154.5 Z" fill="#727272"/>
<circle cx="618" cy="161.8" r="3.7" fill="#727272"/>
<circle cx="641.8" cy="137.9" r="3.9" fill="#f57575"/>
<path d="M662.4,142.5 L673.4,138.2 L678.7,137.7 L689,136.8 M673.4,138.2 L679.1,163.5 L678.7,137.7" fill="none" stroke="#6f6f6f" stroke-width="1.1"/>
<circle cx="662.4" cy="142.5" r="2.5" fill="#7b6f6f"/>
<circle cx="689" cy="136.8" r="2.5" fill="#7b6f6f"/>
<circle cx="679.1" cy="163.5" r="2.5" fill="#7b6f6f"/>
<circle cx="673.4" cy="138.2" r="2.5" fill="#f58a6e"/>
<circle cx="678.7" cy="137.7" r="2.5" fill="#f58a6e"/>
<path d="M720,141.5 H711.5 Q708.5,141.5 708.5,144.5 V157.4 Q708.5,160.4 711.5,160.4 H724.7 Q727.7,160.4 727.7,157.4 V151" fill="none" stroke="#777" stroke-width="2.8"/>
<path d="M721.3,149.3 C722,145 726,143 730,143.5 V140 L735.5,144.5 L730,149 V146.5 C726,146 723,147 721.3,149.3 Z" fill="#8fb4ee"/>
<path d="M751.9,137 V162" stroke="#8a8a8a" stroke-width="1.6" stroke-dasharray="1.6,4.4"/>
<path d="M762,165.7 V152 L764,148 V140 L770,136 L774,134.1 L776,140 V165.7 Z" fill="none" stroke="#dcdcdc" stroke-width="0.8"/>
<path d="M782.5,150.3 H788 V155.3 H793 V160.3 H788 V165.3 H782.5 V160.3 H777.5 V155.3 H782.5 Z" fill="#a8c58a" stroke="#96b47a" stroke-width="0.6"/>
<path d="M814.4,147.5 L829.6,137.7 L835.7,143.2 L825.3,159 L814.4,159 Z" fill="#dde8f5" stroke="#707070" stroke-width="2"/>
<path d="M815,158.5 L825,149" stroke="#707070" stroke-width="1.2"/><circle cx="825.5" cy="149" r="2" fill="none" stroke="#707070" stroke-width="1.1"/>
<path d="M828,139.5 L833.5,144.8" stroke="#707070" stroke-width="1" fill="none"/>
<circle cx="811.9" cy="160.9" r="2.2" fill="#8fb0ef"/>
<path d="M857,137.5 L880.7,137.5" stroke="#6f6f6f" stroke-width="1.6" fill="none"/>
<path d="M862.4,158 V149.7 H857.6 L868.9,138 L880.1,149.7 H875.2 V158" fill="none" stroke="#6f6f6f" stroke-width="1.6"/>
<path d="M868.9,148 L868.9,153" stroke="#6f6f6f" stroke-width="1.6" fill="none"/>
<circle cx="857" cy="137.5" r="2.7" fill="#fafae6" stroke="#6f6f6f" stroke-width="1"/><circle cx="880.7" cy="137.5" r="2.7" fill="#fafae6" stroke="#6f6f6f" stroke-width="1"/>
<circle cx="862.4" cy="161.5" r="3.6" fill="#f5876a" stroke="#6f6f6f" stroke-width="0.8"/><circle cx="875.2" cy="160.9" r="2.5" fill="#f5876a" stroke="#6f6f6f" stroke-width="0.8"/><circle cx="868.9" cy="155" r="2.3" fill="#f5876a" stroke="#6f6f6f" stroke-width="0.8"/>
<path d="M901.4,136.5 Q915,141 928.8,136.5 Q924,150 928.8,163.9 Q915,159 901.4,163.9 Q906,150 901.4,136.5 Z" fill="none" stroke="#6f6f6f" stroke-width="1.2"/>
<path d="M901.4,163.9 L928.8,136.5" stroke="#f55f6a" stroke-width="1.5" stroke-dasharray="3,2" fill="none"/>
<circle cx="901.4" cy="136.5" r="2.2" fill="#7b6f6f"/>
<circle cx="928.8" cy="136.5" r="2.2" fill="#7b6f6f"/>
<circle cx="901.4" cy="163.9" r="2.2" fill="#7b6f6f"/>
<circle cx="928.8" cy="163.9" r="2.2" fill="#7b6f6f"/>
<path d="M944.8,137 V162" stroke="#8a8a8a" stroke-width="1.6" stroke-dasharray="1.6,4.4"/>
<path d="M955.2,139.4 H977.7 V145 A7.6,7.6 0 1 1 970.2,152.3 H955.2 Z" fill="#fff" stroke="#000" stroke-width="1.3"/>
<path d="M1012,141.2 H1006 Q1002.9,141.2 1002.9,144.3 V157.4 Q1002.9,160.5 1006,160.5 H1019.1 Q1022.2,160.5 1022.2,157.4 V151" fill="none" stroke="#000" stroke-width="2.6"/>
<path d="M1015,149.3 C1016,145 1020,143 1024.5,143.5 V139.5 L1030,144 L1024.5,148.5 V146.5 C1020,146 1017,147 1015,149.3 Z" fill="#3b7be0"/>
<path d="M1046,137 V162" stroke="#8a8a8a" stroke-width="1.6" stroke-dasharray="1.6,4.4"/>
<rect x="1062.2" y="136.1" width="13.2" height="6" rx="1.5" fill="none" stroke="#777" stroke-width="1.3"/>
<rect x="1057.1" y="141.2" width="23.9" height="9.6" rx="1.8" fill="#777"/><rect x="1062.2" y="148.5" width="13.2" height="8.5" fill="#777" stroke="#f4f4f4" stroke-width="0.8"/>
<path d="M1064,151.5 H1073 M1064,154 H1071" stroke="#f4f4f4" stroke-width="0.9"/>
<path d="M1083.0,155.8 L1084.8,156.1 L1084.8,157.7 L1083.0,158.0 L1082.7,158.9 L1082.3,159.7 L1083.4,161.2 L1082.2,162.4 L1080.7,161.3 L1079.9,161.7 L1079.0,162.0 L1078.7,163.8 L1077.1,163.8 L1076.8,162.0 L1075.9,161.7 L1075.1,161.3 L1073.6,162.4 L1072.4,161.2 L1073.5,159.7 L1073.1,158.9 L1072.8,158.0 L1071.0,157.7 L1071.0,156.1 L1072.8,155.8 L1073.1,154.9 L1073.5,154.1 L1072.4,152.6 L1073.6,151.4 L1075.1,152.5 L1075.9,152.1 L1076.8,151.8 L1077.1,150.0 L1078.7,150.0 L1079.0,151.8 L1079.9,152.1 L1080.7,152.5 L1082.2,151.4 L1083.4,152.6 L1082.3,154.1 L1082.7,154.9Z" fill="#8fb4ee"/><circle cx="1077.9" cy="156.9" r="2.3" fill="#b5cdf2"/>
<path d="M1113,141.2 H1106.4 Q1103.3,141.2 1103.3,144.3 V157.4 Q1103.3,160.5 1106.4,160.5 H1120 Q1123.1,160.5 1123.1,157.4 V151" fill="none" stroke="#7a7a7a" stroke-width="2.6"/>
<path d="M1115.5,149.3 C1116.5,145 1120.5,143 1125.5,143.5 V139.5 L1131,144 L1125.5,148.5 V146.5 C1121,146 1118,147 1115.5,149.3 Z" fill="#94b6ec"/>
</svg>

<div style="position:absolute;background:#fff;border:1px solid #d2d2d2;border-radius:5px;box-shadow:0 1px 1.5px rgba(0,0,0,.18);left:7px;top:183px;width:238px;height:22px"></div>
<div class="abs" style="left:9px;top:186px;font-size:13px;color:#111;white-space:nowrap">Academy Engraved LET</div>
<div style="position:absolute;left:224px;top:185px;width:18px;height:18px;border:1px solid #dcdcdc;border-radius:4px;background:#fff"></div>
<div style="position:absolute;background:#fff;border:1px solid #d2d2d2;border-radius:5px;box-shadow:0 1px 1.5px rgba(0,0,0,.18);left:259px;top:182px;width:56px;height:20px"></div>
<div class="abs" style="left:267px;top:184px;font-size:13px;color:#111">28</div>
<div style="position:absolute;background:#fff;border:1px solid #d2d2d2;border-radius:5px;box-shadow:0 1px 1.5px rgba(0,0,0,.18);left:713px;top:172px;width:0;height:0;display:none"></div>
<svg class="abs" style="left:0;top:170px" width="1560" height="46" viewBox="0 170 1560 46">
<path d="M230,192 L233.3,195.3 L236.6,192" fill="none" stroke="#222" stroke-width="1.4"/>
<path d="M302.1,190.3 L305.1,187.3 L308.1,190.3 M302.1,194.3 L305.1,197.3 L308.1,194.3" fill="none" stroke="#222" stroke-width="1.3"/>
<path d="M331.5,192.5 C338,182 356,182 362.4,192.5 C356,203 338,203 331.5,192.5 Z" fill="#444"/>
<path d="M336,192.5 C341,186.5 353,186.5 358,192.5 C353,198.5 341,198.5 336,192.5 Z" fill="#f4f4f4"/>
<circle cx="347" cy="192.5" r="5.6" fill="#444"/><circle cx="344.5" cy="190" r="2" fill="#f4f4f4"/>
<text x="380.5" y="204.6" font-family="Liberation Sans" font-size="29" fill="#000">A</text>
<path d="M398,187.4 L401.4,183.2 L404.8,187.4 Z" fill="#3b7be0"/>
<text x="429" y="204.6" font-family="Liberation Sans" font-size="22" fill="#000">A</text>
<path d="M443.9,183 L451,183 L447.4,187.4 Z" fill="#3b7be0"/>
<path d="M479,188.5 L489.5,179.5 L499.2,189.5 L489,199 Z" fill="#cfcfcf"/>
<path d="M489,179.3 L487,191.5" stroke="#444" stroke-width="0.9"/><circle cx="486.7" cy="190.5" r="1.5" fill="#555"/>
<path d="M480.3,203 V194 Q480.3,188 485,187.5" fill="none" stroke="#9cc0e8" stroke-width="2.2"/>
<text x="473.5" y="208.6" font-family="Liberation Sans" font-size="11" fill="#777">A</text>
</svg>
<div style="position:absolute;background:#fff;border:1px solid #d2d2d2;border-radius:5px;box-shadow:0 1px 1.5px rgba(0,0,0,.18);left:514.5px;top:184px;width:82px;height:20px"></div>
<div class="abs" style="left:517.5px;top:186px;font-size:13px;color:#111">Default</div>
<div style="position:absolute;left:577.5px;top:185.5px;width:17px;height:17px;border:1px solid #dcdcdc;border-radius:4px;background:#fff"></div>
<div class="abs" style="left:706.2px;top:173px;width:41.6px;height:42px;background:#dfdfdf;border-radius:4px 4px 0 0"></div>
<div class="abs" style="left:752.2px;top:173px;width:41.6px;height:42px;background:#dfdfdf;border-radius:4px 4px 0 0"></div>
<div class="abs" style="left:798.1px;top:173px;width:41.6px;height:42px;background:#dfdfdf;border-radius:4px 4px 0 0"></div>
<div class="abs" style="left:844.1px;top:173px;width:41.6px;height:42px;background:#dfdfdf;border-radius:4px 4px 0 0"></div>
<div style="position:absolute;background:#fff;border:1px solid #d2d2d2;border-radius:5px;box-shadow:0 1px 1.5px rgba(0,0,0,.18);left:905px;top:182px;width:194px;height:20.5px"></div>
<div class="abs" style="left:914px;top:186.3px;width:38px;height:11.4px;background:#000"></div>
<div class="abs" style="left:955.3px;top:184px;font-size:13px;color:#111">Black</div>
<div style="position:absolute;background:#fff;border:1px solid #d2d2d2;border-radius:5px;box-shadow:0 1px 1.5px rgba(0,0,0,.18);left:1115.6px;top:182px;width:161px;height:20.5px"></div>
<div class="abs" style="left:1125px;top:186.3px;width:37.6px;height:11.2px;border:1px solid #000;background:#fff"></div>
<div class="abs" style="left:1126px;top:191.2px;width:35.6px;height:1.6px;background:#000"></div>
<div class="abs" style="left:1166px;top:184px;font-size:13px;color:#111">Solidline</div>
<div style="position:absolute;background:#fff;border:1px solid #d2d2d2;border-radius:5px;box-shadow:0 1px 1.5px rgba(0,0,0,.18);left:1293.7px;top:181.6px;width:165.3px;height:20.7px"></div>
<div class="abs" style="left:1303px;top:185.9px;width:38px;height:11.7px;border:1px solid #000;background:#fff"></div>
<div class="abs" style="left:1304px;top:190.3px;width:36px;height:2.8px;background:#000"></div>
<div class="abs" style="left:1343.8px;top:184px;font-size:13px;color:#111">0.35mm (ISO)</div>
<svg class="abs" style="left:0;top:170px" width="1560" height="46" viewBox="0 170 1560 46">
<path d="M610,180 V207" stroke="#8a8a8a" stroke-width="1.6" stroke-dasharray="1.6,4.4"/>
<path d="M895.1,180 V207" stroke="#8a8a8a" stroke-width="1.6" stroke-dasharray="1.6,4.4"/>
<path d="M1085.8,190.3 L1088.8,187.3 L1091.8,190.3 M1085.8,194.3 L1088.8,197.3 L1091.8,194.3" fill="none" stroke="#222" stroke-width="1.3"/>
<path d="M1264.1,190.3 L1267.1,187.3 L1270.1,190.3 M1264.1,194.3 L1267.1,197.3 L1270.1,194.3" fill="none" stroke="#222" stroke-width="1.3"/>
<path d="M1445.8,190.3 L1448.8,187.3 L1451.8,190.3 M1445.8,194.3 L1448.8,197.3 L1451.8,194.3" fill="none" stroke="#222" stroke-width="1.3"/>
<path d="M582.7,192.7 L586,196 L589.3,192.7" fill="none" stroke="#222" stroke-width="1.4"/>
<rect x="625.3" y="184.5" width="19.1" height="18.7" fill="none" stroke="#111" stroke-width="1.6"/>
<circle cx="644.1" cy="184.9" r="3.9" fill="#f4f4f4" stroke="#3470b5" stroke-width="1.7"/><circle cx="625.6" cy="202.6" r="3.9" fill="#f4f4f4" stroke="#3470b5" stroke-width="1.7"/>
<path d="M668.7,206.6 L668.2,181.6 L678.5,181.6 M685.6,206.6 L693.7,186.3 M668.7,206.6" fill="none" stroke="#9aa7f0" stroke-width="0.8"/>
<path d="M668.7,206.6 L685.6,206.6" fill="none" stroke="#9aa7f0" stroke-width="0"/>
<path d="M668.7,206.6 C668,190 672,184 676,184 C680,184 681,197 685,197 C688,197 691,191 693.7,186.3" fill="none" stroke="#555" stroke-width="1"/>
<path d="M678.5,181.6 L685.6,206.6" stroke="#9aa7f0" stroke-width="0.8"/>
<circle cx="668.2" cy="181.6" r="1.7" fill="#9dbaf0"/>
<circle cx="678.5" cy="181.6" r="1.7" fill="#9dbaf0"/>
<circle cx="693.7" cy="186.3" r="1.7" fill="#9dbaf0"/>
<circle cx="685.6" cy="206.6" r="1.7" fill="#9dbaf0"/>
<circle cx="668.7" cy="206.6" r="1.7" fill="#9dbaf0"/>
<path d="M713.2,194 H740.7 M727,180.1 V207.6" stroke="#111" stroke-width="1.8"/>
<circle cx="727" cy="194" r="6.4" fill="none" stroke="#3b7be0" stroke-width="2.4"/>
<path d="M759.1,184.5 L786.3,195.1 L759.1,207 M765,181.1 L786.3,195.1 L765,208.5" fill="none" stroke="#111" stroke-width="1.3"/>
<path d="M761,185.2 L766,183.5 M766.5,187.5 L771.5,185.8 M772,189.6 L777,187.9 M777.5,191.7 L782,190.3 M761,206.3 L766,207.8 M766.5,204 L771.5,205.7 M772,201.5 L777,203.2 M777.5,199 L782,200.5" stroke="#6d9be8" stroke-width="2.2"/>
<path d="M819,182 V206" stroke="#111" stroke-width="1.6"/><path d="M814.5,186.5 L819,180.8 L823.5,186.5 Z M814.5,201.8 L819,207.5 L823.5,201.8 Z" fill="#111"/>
<circle cx="819" cy="194" r="2.2" fill="#3b7be0"/>
<path d="M850,199 L868,181 Q870,179 873,179 L879,179.5 Q881,180 881,182.5 L880.5,189 Q880.5,191 879,192.5 L861,210 Q859,211.5 857,210 L850,203 Q848.5,201 850,199 Z" fill="#3b6fd8" stroke="#111" stroke-width="1.4"/>
<circle cx="875" cy="185.5" r="2.3" fill="#fff" stroke="#111" stroke-width="0.8"/>
<circle cx="863" cy="196.5" r="4.6" fill="none" stroke="#cfd7e6" stroke-width="2.2" stroke-dasharray="1.6,1.1"/><circle cx="863" cy="196.5" r="2" fill="#3b6fd8" stroke="#cfd7e6" stroke-width="1"/>
<path d="M1497,204 Q1501,190 1490,189 V194 L1480.6,186.5 L1490,179 V184 Q1506,185 1497,204 Z" fill="#3a86d0"/>
<rect x="1526.5" y="184" width="20.6" height="20.4" rx="1" fill="#3d3d3d"/><rect x="1529.5" y="185.5" width="14.6" height="7" fill="#fff"/>
<rect x="1530.5" y="196" width="12" height="8" fill="#e8e8e8"/><path d="M1541,193 V200 M1538,197.5 L1541,201.5 L1544,197.5" stroke="#3b9a2a" stroke-width="2.2" fill="none"/>
</svg>
<div class="abs" style="left:0;top:215px;width:1972px;height:1px;background:#c9c9c9"></div>
<svg class="abs" style="left:0;top:0" width="1972" height="1163" viewBox="0 0 1972 1163">
<defs><pattern id="dots" patternUnits="userSpaceOnUse" x="0" y="0" width="4" height="4"><rect width="4" height="4" fill="#fff"/><rect x="1" y="2" width="1" height="1" fill="#000"/></pattern><clipPath id="cv"><rect x="1" y="221" width="1628" height="915"/></clipPath></defs>
<rect x="0" y="220" width="1630" height="917" fill="#fff"/><path d="M0,220.5 H1629.5 V1136.5" fill="none" stroke="#959595" stroke-width="1"/><path d="M0,1136.5 H1629" stroke="#b9b9b9" stroke-width="1"/>
<g clip-path="url(#cv)">
<path d="M3.5,429.6 L48.3,429.6 C80,429.6 104,418 104.7,377.4 L247.4,415.9 C243,460 236,510 237,530 C238,575 262,591.4 300,591.4 L309,591.4 L299,771 L306.5,947.2  C304.0,947.2 295.5,947.0 291.3,947.4 C287.1,947.8 284.2,948.4 281.1,949.4 C278.1,950.4 275.5,951.6 273.0,953.5 C270.5,955.4 268.3,958.5 265.9,960.6 C263.5,962.7 261.3,964.5 258.8,966.1 C256.3,967.7 253.7,968.9 250.7,970.2 C247.7,971.5 245.7,972.4 240.6,973.8 C235.5,975.1 227.1,977.0 220.3,978.3 C213.5,979.6 208.4,980.6 200.0,981.4 C191.6,982.2 179.8,982.7 170.0,983.3 C160.2,983.9 152.7,984.4 141.0,984.9 C129.3,985.4 115.5,986.0 100.0,986.5 C84.5,987.0 64.4,987.5 48.3,987.7 C32.2,987.9 11.0,987.7 3.5,987.7 Z" fill="none" stroke="#c4c4c4" stroke-width="17.6" stroke-linejoin="miter" stroke-miterlimit="6"/>
<path d="M3.5,429.6 L48.3,429.6 C80,429.6 104,418 104.7,377.4 L247.4,415.9 C243,460 236,510 237,530 C238,575 262,591.4 300,591.4 L309,591.4 L299,771 L306.5,947.2  C304.0,947.2 295.5,947.0 291.3,947.4 C287.1,947.8 284.2,948.4 281.1,949.4 C278.1,950.4 275.5,951.6 273.0,953.5 C270.5,955.4 268.3,958.5 265.9,960.6 C263.5,962.7 261.3,964.5 258.8,966.1 C256.3,967.7 253.7,968.9 250.7,970.2 C247.7,971.5 245.7,972.4 240.6,973.8 C235.5,975.1 227.1,977.0 220.3,978.3 C213.5,979.6 208.4,980.6 200.0,981.4 C191.6,982.2 179.8,982.7 170.0,983.3 C160.2,983.9 152.7,984.4 141.0,984.9 C129.3,985.4 115.5,986.0 100.0,986.5 C84.5,987.0 64.4,987.5 48.3,987.7 C32.2,987.9 11.0,987.7 3.5,987.7 Z" fill="none" stroke="url(#dots)" stroke-width="16" stroke-linejoin="miter" stroke-miterlimit="6"/>
<path d="M3.5,429.6 L48.3,429.6 C80,429.6 104,418 104.7,377.4 L247.4,415.9 C243,460 236,510 237,530 C238,575 262,591.4 300,591.4 L309,591.4 L299,771 L306.5,947.2  C304.0,947.2 295.5,947.0 291.3,947.4 C287.1,947.8 284.2,948.4 281.1,949.4 C278.1,950.4 275.5,951.6 273.0,953.5 C270.5,955.4 268.3,958.5 265.9,960.6 C263.5,962.7 261.3,964.5 258.8,966.1 C256.3,967.7 253.7,968.9 250.7,970.2 C247.7,971.5 245.7,972.4 240.6,973.8 C235.5,975.1 227.1,977.0 220.3,978.3 C213.5,979.6 208.4,980.6 200.0,981.4 C191.6,982.2 179.8,982.7 170.0,983.3 C160.2,983.9 152.7,984.4 141.0,984.9 C129.3,985.4 115.5,986.0 100.0,986.5 C84.5,987.0 64.4,987.5 48.3,987.7 C32.2,987.9 11.0,987.7 3.5,987.7 Z" fill="#fff" stroke="#bdbdbd" stroke-width="1.2"/>
<path d="M405.1,436.6 C450,430 520,424.5 598.6,424.5 L623.3,424.5 L623.3,986.9  C616.1,986.9 598.0,987.0 580.2,986.7 C562.5,986.5 535.4,986.0 516.8,985.4 C498.2,984.8 483.4,984.3 468.6,983.1 C453.8,981.9 438.6,979.9 428.0,978.0 C417.4,976.1 411.0,973.6 405.0,971.5 C399.0,969.4 395.8,967.7 392.0,965.5 C388.2,963.3 385.3,960.8 382.0,958.5 C378.7,956.2 375.7,953.4 372.0,951.5 C368.3,949.6 365.2,948.2 360.0,947.3 C354.8,946.4 344.2,946.4 341.0,946.2 L348.5,769.3 L338.1,590.4 C370,588 405,578 416,550 C427,522 417,480 405.1,436.6 Z" fill="none" stroke="#c4c4c4" stroke-width="17.6" stroke-linejoin="miter" stroke-miterlimit="6"/>
<path d="M405.1,436.6 C450,430 520,424.5 598.6,424.5 L623.3,424.5 L623.3,986.9  C616.1,986.9 598.0,987.0 580.2,986.7 C562.5,986.5 535.4,986.0 516.8,985.4 C498.2,984.8 483.4,984.3 468.6,983.1 C453.8,981.9 438.6,979.9 428.0,978.0 C417.4,976.1 411.0,973.6 405.0,971.5 C399.0,969.4 395.8,967.7 392.0,965.5 C388.2,963.3 385.3,960.8 382.0,958.5 C378.7,956.2 375.7,953.4 372.0,951.5 C368.3,949.6 365.2,948.2 360.0,947.3 C354.8,946.4 344.2,946.4 341.0,946.2 L348.5,769.3 L338.1,590.4 C370,588 405,578 416,550 C427,522 417,480 405.1,436.6 Z" fill="none" stroke="url(#dots)" stroke-width="16" stroke-linejoin="miter" stroke-miterlimit="6"/>
<path d="M405.1,436.6 C450,430 520,424.5 598.6,424.5 L623.3,424.5 L623.3,986.9  C616.1,986.9 598.0,987.0 580.2,986.7 C562.5,986.5 535.4,986.0 516.8,985.4 C498.2,984.8 483.4,984.3 468.6,983.1 C453.8,981.9 438.6,979.9 428.0,978.0 C417.4,976.1 411.0,973.6 405.0,971.5 C399.0,969.4 395.8,967.7 392.0,965.5 C388.2,963.3 385.3,960.8 382.0,958.5 C378.7,956.2 375.7,953.4 372.0,951.5 C368.3,949.6 365.2,948.2 360.0,947.3 C354.8,946.4 344.2,946.4 341.0,946.2 L348.5,769.3 L338.1,590.4 C370,588 405,578 416,550 C427,522 417,480 405.1,436.6 Z" fill="#fff" stroke="#bdbdbd" stroke-width="1.2"/>
<path d="M384.1,341.3 L527.5,306 C535,330 560,342.5 595,342.5 L595,400 L398.1,400 Z" fill="none" stroke="#c4c4c4" stroke-width="17.6" stroke-linejoin="miter" stroke-miterlimit="6"/>
<path d="M384.1,341.3 L527.5,306 C535,330 560,342.5 595,342.5 L595,400 L398.1,400 Z" fill="none" stroke="url(#dots)" stroke-width="16" stroke-linejoin="miter" stroke-miterlimit="6"/>
<path d="M384.1,341.3 L527.5,306 C535,330 560,342.5 595,342.5 L595,400 L398.1,400 Z" fill="#fff" stroke="#bdbdbd" stroke-width="1.2"/>
<path d="M717.4,362.4 C721.0,361.2 730.9,358.0 738.7,355.1 C746.6,352.2 755.9,349.1 764.5,344.8 C773.1,340.5 781.7,335.0 790.3,329.3 C798.9,323.6 807.5,317.1 816.1,310.6 C824.7,304.2 833.3,297.2 841.9,290.6 C850.5,284.1 859.1,277.3 867.7,271.3 C876.3,265.3 884.8,258.7 893.4,254.5 C902.0,250.3 912.6,247.8 919.2,246.3 C925.8,244.8 928.6,245.6 933.0,245.6 C937.4,245.6 939.4,245.6 945.8,246.5 C952.2,247.4 963.0,248.7 971.6,251.3 C980.2,253.9 988.8,257.7 997.4,262.2 C1006.0,266.7 1014.6,272.6 1023.2,278.4 C1031.8,284.2 1040.4,289.8 1049.0,297.1 C1057.6,304.4 1069.4,317.1 1074.8,322.0 C1080.2,326.9 1080.4,326.0 1081.5,326.8 L1146.6,362.4 L1114.2,508.9 L1117.8,525.4 L746.4,525.4 L750,508.9 Z" fill="none" stroke="#c4c4c4" stroke-width="17.6" stroke-linejoin="miter" stroke-miterlimit="6"/>
<path d="M717.4,362.4 C721.0,361.2 730.9,358.0 738.7,355.1 C746.6,352.2 755.9,349.1 764.5,344.8 C773.1,340.5 781.7,335.0 790.3,329.3 C798.9,323.6 807.5,317.1 816.1,310.6 C824.7,304.2 833.3,297.2 841.9,290.6 C850.5,284.1 859.1,277.3 867.7,271.3 C876.3,265.3 884.8,258.7 893.4,254.5 C902.0,250.3 912.6,247.8 919.2,246.3 C925.8,244.8 928.6,245.6 933.0,245.6 C937.4,245.6 939.4,245.6 945.8,246.5 C952.2,247.4 963.0,248.7 971.6,251.3 C980.2,253.9 988.8,257.7 997.4,262.2 C1006.0,266.7 1014.6,272.6 1023.2,278.4 C1031.8,284.2 1040.4,289.8 1049.0,297.1 C1057.6,304.4 1069.4,317.1 1074.8,322.0 C1080.2,326.9 1080.4,326.0 1081.5,326.8 L1146.6,362.4 L1114.2,508.9 L1117.8,525.4 L746.4,525.4 L750,508.9 Z" fill="none" stroke="url(#dots)" stroke-width="16" stroke-linejoin="miter" stroke-miterlimit="6"/>
<path d="M717.4,362.4 C721.0,361.2 730.9,358.0 738.7,355.1 C746.6,352.2 755.9,349.1 764.5,344.8 C773.1,340.5 781.7,335.0 790.3,329.3 C798.9,323.6 807.5,317.1 816.1,310.6 C824.7,304.2 833.3,297.2 841.9,290.6 C850.5,284.1 859.1,277.3 867.7,271.3 C876.3,265.3 884.8,258.7 893.4,254.5 C902.0,250.3 912.6,247.8 919.2,246.3 C925.8,244.8 928.6,245.6 933.0,245.6 C937.4,245.6 939.4,245.6 945.8,246.5 C952.2,247.4 963.0,248.7 971.6,251.3 C980.2,253.9 988.8,257.7 997.4,262.2 C1006.0,266.7 1014.6,272.6 1023.2,278.4 C1031.8,284.2 1040.4,289.8 1049.0,297.1 C1057.6,304.4 1069.4,317.1 1074.8,322.0 C1080.2,326.9 1080.4,326.0 1081.5,326.8 L1146.6,362.4 L1114.2,508.9 L1117.8,525.4 L746.4,525.4 L750,508.9 Z" fill="#fff" stroke="#bdbdbd" stroke-width="1.2"/>
<path d="M724.4,679.4 C728.5,678.2 740.4,675.4 748.7,672.5 C757.1,669.6 765.9,666.4 774.5,662.2 C783.1,658.0 791.7,653.2 800.3,647.4 C808.9,641.6 817.5,634.0 826.1,627.4 C834.7,620.8 843.3,614.2 851.9,608.0 C860.5,601.8 869.1,595.9 877.7,590.0 C886.3,584.1 895.9,576.9 903.4,572.6 C910.9,568.3 916.7,565.9 922.8,564.2 C928.9,562.6 934.5,562.7 940.0,562.7 C945.5,562.7 948.9,563.0 955.8,564.2 C962.7,565.4 973.0,567.3 981.6,570.0 C990.2,572.7 998.8,576.0 1007.4,580.3 C1016.0,584.6 1024.6,589.7 1033.2,595.8 C1041.8,601.9 1051.2,610.0 1059.0,617.1 C1066.8,624.2 1076.2,634.3 1080.2,638.2 C1084.2,642.1 1082.5,640.2 1083.0,640.6 L1154,679.4 L1065.5,1076.7 C1040,1073 1030,1072.4 1000,1072.4 L900,1072.4 C850,1072 830,1074 812.9,1076.7 Z" fill="none" stroke="#c4c4c4" stroke-width="17.6" stroke-linejoin="miter" stroke-miterlimit="6"/>
<path d="M724.4,679.4 C728.5,678.2 740.4,675.4 748.7,672.5 C757.1,669.6 765.9,666.4 774.5,662.2 C783.1,658.0 791.7,653.2 800.3,647.4 C808.9,641.6 817.5,634.0 826.1,627.4 C834.7,620.8 843.3,614.2 851.9,608.0 C860.5,601.8 869.1,595.9 877.7,590.0 C886.3,584.1 895.9,576.9 903.4,572.6 C910.9,568.3 916.7,565.9 922.8,564.2 C928.9,562.6 934.5,562.7 940.0,562.7 C945.5,562.7 948.9,563.0 955.8,564.2 C962.7,565.4 973.0,567.3 981.6,570.0 C990.2,572.7 998.8,576.0 1007.4,580.3 C1016.0,584.6 1024.6,589.7 1033.2,595.8 C1041.8,601.9 1051.2,610.0 1059.0,617.1 C1066.8,624.2 1076.2,634.3 1080.2,638.2 C1084.2,642.1 1082.5,640.2 1083.0,640.6 L1154,679.4 L1065.5,1076.7 C1040,1073 1030,1072.4 1000,1072.4 L900,1072.4 C850,1072 830,1074 812.9,1076.7 Z" fill="none" stroke="url(#dots)" stroke-width="16" stroke-linejoin="miter" stroke-miterlimit="6"/>
<path d="M724.4,679.4 C728.5,678.2 740.4,675.4 748.7,672.5 C757.1,669.6 765.9,666.4 774.5,662.2 C783.1,658.0 791.7,653.2 800.3,647.4 C808.9,641.6 817.5,634.0 826.1,627.4 C834.7,620.8 843.3,614.2 851.9,608.0 C860.5,601.8 869.1,595.9 877.7,590.0 C886.3,584.1 895.9,576.9 903.4,572.6 C910.9,568.3 916.7,565.9 922.8,564.2 C928.9,562.6 934.5,562.7 940.0,562.7 C945.5,562.7 948.9,563.0 955.8,564.2 C962.7,565.4 973.0,567.3 981.6,570.0 C990.2,572.7 998.8,576.0 1007.4,580.3 C1016.0,584.6 1024.6,589.7 1033.2,595.8 C1041.8,601.9 1051.2,610.0 1059.0,617.1 C1066.8,624.2 1076.2,634.3 1080.2,638.2 C1084.2,642.1 1082.5,640.2 1083.0,640.6 L1154,679.4 L1065.5,1076.7 C1040,1073 1030,1072.4 1000,1072.4 L900,1072.4 C850,1072 830,1074 812.9,1076.7 Z" fill="#fff" stroke="#bdbdbd" stroke-width="1.2"/>
<path d="M1316.7,345.2 C1370,352 1430,355 1480.1,355.3 L1480.1,386.2 C1430,386.5 1370,390 1316.7,402.5 Z" fill="none" stroke="#c4c4c4" stroke-width="17.6" stroke-linejoin="miter" stroke-miterlimit="6"/>
<path d="M1316.7,345.2 C1370,352 1430,355 1480.1,355.3 L1480.1,386.2 C1430,386.5 1370,390 1316.7,402.5 Z" fill="none" stroke="url(#dots)" stroke-width="16" stroke-linejoin="miter" stroke-miterlimit="6"/>
<path d="M1316.7,345.2 C1370,352 1430,355 1480.1,355.3 L1480.1,386.2 C1430,386.5 1370,390 1316.7,402.5 Z" fill="#fff" stroke="#bdbdbd" stroke-width="1.2"/>
<path d="M1300.1,507.4 C1338.5,496.0 1398.5,494.3 1483.3,494.3 L1483.3,521.4 C1474.2,521.8 1446.0,522.7 1428.5,524.0 C1411.0,525.3 1391.0,528.1 1378.5,529.0 C1366.0,529.9 1363.5,529.9 1353.5,529.6 C1343.5,529.3 1327.7,528.0 1318.5,527.0 C1309.3,526.0 1301.7,524.4 1298.3,523.9 Z" fill="none" stroke="#c4c4c4" stroke-width="17.6" stroke-linejoin="miter" stroke-miterlimit="6"/>
<path d="M1300.1,507.4 C1338.5,496.0 1398.5,494.3 1483.3,494.3 L1483.3,521.4 C1474.2,521.8 1446.0,522.7 1428.5,524.0 C1411.0,525.3 1391.0,528.1 1378.5,529.0 C1366.0,529.9 1363.5,529.9 1353.5,529.6 C1343.5,529.3 1327.7,528.0 1318.5,527.0 C1309.3,526.0 1301.7,524.4 1298.3,523.9 Z" fill="none" stroke="url(#dots)" stroke-width="16" stroke-linejoin="miter" stroke-miterlimit="6"/>
<path d="M1300.1,507.4 C1338.5,496.0 1398.5,494.3 1483.3,494.3 L1483.3,521.4 C1474.2,521.8 1446.0,522.7 1428.5,524.0 C1411.0,525.3 1391.0,528.1 1378.5,529.0 C1366.0,529.9 1363.5,529.9 1353.5,529.6 C1343.5,529.3 1327.7,528.0 1318.5,527.0 C1309.3,526.0 1301.7,524.4 1298.3,523.9 Z" fill="#fff" stroke="#bdbdbd" stroke-width="1.2"/>
<path d="M1296.9,952.4 L1535,952.4 L1535,1001.6 L1296.9,1001.6 Z" fill="none" stroke="#c4c4c4" stroke-width="17.6" stroke-linejoin="miter" stroke-miterlimit="6"/>
<path d="M1296.9,952.4 L1535,952.4 L1535,1001.6 L1296.9,1001.6 Z" fill="none" stroke="url(#dots)" stroke-width="16" stroke-linejoin="miter" stroke-miterlimit="6"/>
<path d="M1296.9,952.4 L1535,952.4 L1535,1001.6 L1296.9,1001.6 Z" fill="#fff" stroke="#bdbdbd" stroke-width="1.2"/>
<path d="M1376.9,600.8 L1451.1,600.8 L1451.1,625.4 L1376.9,625.4 Z" fill="none" stroke="#c4c4c4" stroke-width="17.6" stroke-linejoin="miter" stroke-miterlimit="6"/>
<path d="M1376.9,600.8 L1451.1,600.8 L1451.1,625.4 L1376.9,625.4 Z" fill="none" stroke="url(#dots)" stroke-width="16" stroke-linejoin="miter" stroke-miterlimit="6"/>
<path d="M1376.9,600.8 L1451.1,600.8 L1451.1,625.4 L1376.9,625.4 Z" fill="#fff" stroke="#bdbdbd" stroke-width="1.2"/>
<path d="M1490.6,600.8 L1564.6,600.8 L1564.6,625.4 Q1527,641.8 1490.6,625.4 Z" fill="none" stroke="#c4c4c4" stroke-width="17.6" stroke-linejoin="miter" stroke-miterlimit="6"/>
<path d="M1490.6,600.8 L1564.6,600.8 L1564.6,625.4 Q1527,641.8 1490.6,625.4 Z" fill="none" stroke="url(#dots)" stroke-width="16" stroke-linejoin="miter" stroke-miterlimit="6"/>
<path d="M1490.6,600.8 L1564.6,600.8 L1564.6,625.4 Q1527,641.8 1490.6,625.4 Z" fill="#fff" stroke="#bdbdbd" stroke-width="1.2"/>
<path d="M1378.5,678.3 L1452.4,678.3 L1452.4,809.5 L1415.3,818 L1378.5,809.5 Z" fill="none" stroke="#c4c4c4" stroke-width="17.6" stroke-linejoin="miter" stroke-miterlimit="6"/>
<path d="M1378.5,678.3 L1452.4,678.3 L1452.4,809.5 L1415.3,818 L1378.5,809.5 Z" fill="none" stroke="url(#dots)" stroke-width="16" stroke-linejoin="miter" stroke-miterlimit="6"/>
<path d="M1378.5,678.3 L1452.4,678.3 L1452.4,809.5 L1415.3,818 L1378.5,809.5 Z" fill="#fff" stroke="#bdbdbd" stroke-width="1.2"/>
<path d="M1490.6,681.7 Q1527,666.1 1564.6,681.7 L1564.6,813.1 Q1527,829.5 1490.6,813.1 Z" fill="none" stroke="#c4c4c4" stroke-width="17.6" stroke-linejoin="miter" stroke-miterlimit="6"/>
<path d="M1490.6,681.7 Q1527,666.1 1564.6,681.7 L1564.6,813.1 Q1527,829.5 1490.6,813.1 Z" fill="none" stroke="url(#dots)" stroke-width="16" stroke-linejoin="miter" stroke-miterlimit="6"/>
<path d="M1490.6,681.7 Q1527,666.1 1564.6,681.7 L1564.6,813.1 Q1527,829.5 1490.6,813.1 Z" fill="#fff" stroke="#bdbdbd" stroke-width="1.2"/>
<path d="M1299.9,1066.4 L1424.7,1066.4 L1424.7,1090.7 L1299.9,1090.7 Z" fill="none" stroke="#c4c4c4" stroke-width="17.6" stroke-linejoin="miter" stroke-miterlimit="6"/>
<path d="M1299.9,1066.4 L1424.7,1066.4 L1424.7,1090.7 L1299.9,1090.7 Z" fill="none" stroke="url(#dots)" stroke-width="16" stroke-linejoin="miter" stroke-miterlimit="6"/>
<path d="M1299.9,1066.4 L1424.7,1066.4 L1424.7,1090.7 L1299.9,1090.7 Z" fill="#fff" stroke="#bdbdbd" stroke-width="1.2"/>
<path d="M1451.3,1046.5 L1576.4,1046.5 L1576.4,1071.2 L1600.9,1071.2 L1613.3,1083.2 L1600.9,1095.7 L1451.3,1095.7 Z" fill="none" stroke="#c4c4c4" stroke-width="17.6" stroke-linejoin="miter" stroke-miterlimit="6"/>
<path d="M1451.3,1046.5 L1576.4,1046.5 L1576.4,1071.2 L1600.9,1071.2 L1613.3,1083.2 L1600.9,1095.7 L1451.3,1095.7 Z" fill="none" stroke="url(#dots)" stroke-width="16" stroke-linejoin="miter" stroke-miterlimit="6"/>
<path d="M1451.3,1046.5 L1576.4,1046.5 L1576.4,1071.2 L1600.9,1071.2 L1613.3,1083.2 L1600.9,1095.7 L1451.3,1095.7 Z" fill="#fff" stroke="#bdbdbd" stroke-width="1.2"/>
<path d="M468.6,582.4 L458.1,769.6 L468.5,878 L479.1,769.6 Z" fill="url(#dots)" stroke="#aaa" stroke-width="1"/>
<path d="M468.5,878 L468.5,983" stroke="#aaa" stroke-width="3.2"/><path d="M468.5,878 L468.5,983" stroke="url(#dots)" stroke-width="2"/>
<path d="M945.7,1039.7 L945.7,1072.4 L962.2,1072.4 Z" fill="url(#dots)" stroke="#aaa" stroke-width="1"/>
<path d="M982.8,1039.7 L982.8,1072.4 L999.1,1072.4 Z" fill="url(#dots)" stroke="#aaa" stroke-width="1"/>
<path d="M1315,255.5 C1370,262 1430,265 1478.4,265.8 L1478.4,305 C1430,305 1370,308 1315,321.2 Z" fill="none" stroke="#b0b0b0" stroke-width="1.2"/>
<path d="M1301.6,454.4 C1340.0,443.0 1400.0,441.3 1484.8,441.3 L1484.8,468.4 C1475.7,468.8 1447.5,469.7 1430.0,471.0 C1412.5,472.3 1392.5,475.1 1380.0,476.0 C1367.5,476.9 1365.0,476.9 1355.0,476.6 C1345.0,476.3 1329.2,474.9 1320.0,474.0 C1310.8,473.1 1303.2,471.4 1299.8,470.9 Z" fill="none" stroke="#b0b0b0" stroke-width="1.2"/>
<path d="M1293.1,880 L1531.2,880 L1531.2,929.4 L1293.1,929.4 Z" fill="none" stroke="#b0b0b0" stroke-width="1.2"/>
<rect x="338.5" y="424.5" width="285.3" height="562.5" fill="none" stroke="#333" stroke-width="1.1" stroke-dasharray="4,2"/>
<circle cx="3.5" cy="429.6" r="2.1" fill="#000"/>
<circle cx="48.3" cy="429.6" r="2.1" fill="#000"/>
<circle cx="104.7" cy="377.4" r="2.1" fill="#000"/>
<circle cx="247.4" cy="415.9" r="2.1" fill="#000"/>
<circle cx="309" cy="591.4" r="2.1" fill="#000"/>
<circle cx="299" cy="771" r="2.1" fill="#000"/>
<circle cx="306.7" cy="947.2" r="2.1" fill="#000"/>
<circle cx="48.3" cy="987.7" r="2.1" fill="#000"/>
<circle cx="3.5" cy="987.7" r="2.1" fill="#000"/>
<circle cx="405.1" cy="436.6" r="2.1" fill="#000"/>
<circle cx="598.6" cy="424.5" r="2.1" fill="#000"/>
<circle cx="623.7" cy="424.5" r="2.1" fill="#000"/>
<circle cx="338.1" cy="590.4" r="2.1" fill="#000"/>
<circle cx="348.5" cy="769.3" r="2.1" fill="#000"/>
<circle cx="340.8" cy="945.7" r="2.1" fill="#000"/>
<circle cx="623.8" cy="987" r="2.1" fill="#000"/>
<circle cx="600" cy="987" r="2.1" fill="#000"/>
<circle cx="468.6" cy="582.4" r="2.1" fill="#000"/>
<circle cx="458.1" cy="769.6" r="2.1" fill="#000"/>
<circle cx="479.1" cy="769.6" r="2.1" fill="#000"/>
<circle cx="468.5" cy="878" r="2.1" fill="#000"/>
<circle cx="468.5" cy="983" r="2.1" fill="#000"/>
<circle cx="384.1" cy="341.3" r="2.1" fill="#000"/>
<circle cx="527.5" cy="306" r="2.1" fill="#000"/>
<circle cx="595" cy="342.5" r="2.1" fill="#000"/>
<circle cx="595" cy="400" r="2.1" fill="#000"/>
<circle cx="398.1" cy="400" r="2.1" fill="#000"/>
<circle cx="717.2" cy="362.6" r="2.1" fill="#000"/>
<circle cx="1146.7" cy="362.6" r="2.1" fill="#000"/>
<circle cx="750" cy="508.9" r="2.1" fill="#000"/>
<circle cx="746.4" cy="525.4" r="2.1" fill="#000"/>
<circle cx="1114.2" cy="508.9" r="2.1" fill="#000"/>
<circle cx="1117.8" cy="525.4" r="2.1" fill="#000"/>
<circle cx="724.3" cy="679.4" r="2.1" fill="#000"/>
<circle cx="1154.2" cy="679.4" r="2.1" fill="#000"/>
<circle cx="812.9" cy="1076.7" r="2.1" fill="#000"/>
<circle cx="1065.5" cy="1076.7" r="2.1" fill="#000"/>
<circle cx="1015.5" cy="949.1" r="2.1" fill="#000"/>
<circle cx="945.7" cy="1039.7" r="2.1" fill="#000"/>
<circle cx="945.7" cy="1072.4" r="2.1" fill="#000"/>
<circle cx="962.2" cy="1072.4" r="2.1" fill="#000"/>
<circle cx="982.8" cy="1039.7" r="2.1" fill="#000"/>
<circle cx="982.8" cy="1072.4" r="2.1" fill="#000"/>
<circle cx="999.1" cy="1072.4" r="2.1" fill="#000"/>
<circle cx="1015.5" cy="1072.4" r="2.1" fill="#000"/>
<circle cx="939.3" cy="1072.4" r="2.1" fill="#000"/>
<circle cx="1315" cy="255.5" r="2.1" fill="#000"/>
<circle cx="1478.4" cy="265.8" r="2.1" fill="#000"/>
<circle cx="1478.4" cy="305" r="2.1" fill="#000"/>
<circle cx="1315" cy="321.2" r="2.1" fill="#000"/>
<circle cx="1316.7" cy="345.2" r="2.1" fill="#000"/>
<circle cx="1480.1" cy="355.3" r="2.1" fill="#000"/>
<circle cx="1480.1" cy="386.2" r="2.1" fill="#000"/>
<circle cx="1316.7" cy="402.5" r="2.1" fill="#000"/>
<circle cx="1301.6" cy="454.4" r="2.1" fill="#000"/>
<circle cx="1299.8" cy="470.9" r="2.1" fill="#000"/>
<circle cx="1484.8" cy="441.3" r="2.1" fill="#000"/>
<circle cx="1484.8" cy="468.4" r="2.1" fill="#000"/>
<circle cx="1300.1" cy="507.4" r="2.1" fill="#000"/>
<circle cx="1298.3" cy="523.9" r="2.1" fill="#000"/>
<circle cx="1483.3" cy="494.3" r="2.1" fill="#000"/>
<circle cx="1483.3" cy="521.4" r="2.1" fill="#000"/>
<circle cx="1293.1" cy="880" r="2.1" fill="#000"/>
<circle cx="1531.2" cy="880" r="2.1" fill="#000"/>
<circle cx="1531.2" cy="929.4" r="2.1" fill="#000"/>
<circle cx="1293.1" cy="929.4" r="2.1" fill="#000"/>
<circle cx="1296.9" cy="952.4" r="2.1" fill="#000"/>
<circle cx="1535" cy="952.4" r="2.1" fill="#000"/>
<circle cx="1535" cy="1001.6" r="2.1" fill="#000"/>
<circle cx="1296.9" cy="1001.6" r="2.1" fill="#000"/>
<circle cx="1376.9" cy="600.8" r="2.1" fill="#000"/>
<circle cx="1451.1" cy="600.8" r="2.1" fill="#000"/>
<circle cx="1451.1" cy="625.4" r="2.1" fill="#000"/>
<circle cx="1376.9" cy="625.4" r="2.1" fill="#000"/>
<circle cx="1413.8" cy="625.4" r="2.1" fill="#000"/>
<circle cx="1490.6" cy="600.8" r="2.1" fill="#000"/>
<circle cx="1564.6" cy="600.8" r="2.1" fill="#000"/>
<circle cx="1564.6" cy="625.4" r="2.1" fill="#000"/>
<circle cx="1490.6" cy="625.4" r="2.1" fill="#000"/>
<circle cx="1378.5" cy="678.3" r="2.1" fill="#000"/>
<circle cx="1452.4" cy="678.3" r="2.1" fill="#000"/>
<circle cx="1378.5" cy="703" r="2.1" fill="#000"/>
<circle cx="1452.4" cy="703" r="2.1" fill="#000"/>
<circle cx="1378.5" cy="809.5" r="2.1" fill="#000"/>
<circle cx="1452.4" cy="809.5" r="2.1" fill="#000"/>
<circle cx="1415.3" cy="818" r="2.1" fill="#000"/>
<circle cx="1490.6" cy="681.7" r="2.1" fill="#000"/>
<circle cx="1564.6" cy="681.7" r="2.1" fill="#000"/>
<circle cx="1490.6" cy="813.1" r="2.1" fill="#000"/>
<circle cx="1564.6" cy="813.1" r="2.1" fill="#000"/>
<circle cx="1299.9" cy="1066.4" r="2.1" fill="#000"/>
<circle cx="1424.7" cy="1066.4" r="2.1" fill="#000"/>
<circle cx="1424.7" cy="1090.7" r="2.1" fill="#000"/>
<circle cx="1299.9" cy="1090.7" r="2.1" fill="#000"/>
<circle cx="1451.3" cy="1046.5" r="2.1" fill="#000"/>
<circle cx="1576.4" cy="1046.5" r="2.1" fill="#000"/>
<circle cx="1576.4" cy="1071.2" r="2.1" fill="#000"/>
<circle cx="1600.9" cy="1071.2" r="2.1" fill="#000"/>
<circle cx="1613.3" cy="1083.2" r="2.1" fill="#000"/>
<circle cx="1600.9" cy="1095.7" r="2.1" fill="#000"/>
<circle cx="1451.3" cy="1095.7" r="2.1" fill="#000"/>
<g font-family="Liberation Serif" font-size="6.5" fill="#4a4a4a" style="will-change:transform">
<text x="7.5" y="435.6">A32</text>
<text x="52.3" y="435.6">A20</text>
<text x="90.7" y="379.4">A22</text>
<text x="219.4" y="425.9">A23</text>
<text x="287.0" y="599.4">A24</text>
<text x="283.0" y="777.0">A30</text>
<text x="308.7" y="953.2">A27</text>
<text x="50.3" y="993.7">A6</text>
<text x="5.5" y="993.7">A33</text>
<text x="390.1" y="437.6">A27</text>
<text x="588.6" y="430.5">A35</text>
<text x="625.7" y="430.5">A34</text>
<text x="324.1" y="596.4">A36</text>
<text x="352.5" y="777.3">A31</text>
<text x="342.8" y="951.7">A48</text>
<text x="625.8" y="993.0">A35</text>
<text x="462.6" y="572.4">A37</text>
<text x="444.1" y="761.6">A40</text>
<text x="481.1" y="761.6">A39</text>
<text x="454.5" y="879.0">A46</text>
<text x="380.1" y="333.3">A17</text>
<text x="519.5" y="300.0">A18</text>
<text x="583.0" y="348.5">A28</text>
<text x="583.0" y="406.0">A25</text>
<text x="384.1" y="400.0">A26</text>
<text x="719.2" y="368.6">C4</text>
<text x="1148.7" y="368.6">C5</text>
<text x="752.0" y="502.9">C34</text>
<text x="748.4" y="531.4">C38</text>
<text x="1100.2" y="502.9">C33</text>
<text x="1119.8" y="531.4">C40</text>
<text x="726.3" y="685.4">C4</text>
<text x="1156.2" y="685.4">C5</text>
<text x="814.9" y="1082.7">C37</text>
<text x="1051.5" y="1076.7">C39</text>
<text x="1003.5" y="949.1">C18</text>
<text x="931.7" y="1037.7">C24</text>
<text x="945.7" y="1080.4">C22</text>
<text x="964.2" y="1078.4">C21</text>
<text x="968.8" y="1037.7">C23</text>
<text x="984.8" y="1078.4">C20</text>
<text x="1001.1" y="1078.4">C19</text>
<text x="1017.5" y="1078.4">C17</text>
<text x="929.3" y="1082.4">C16</text>
<text x="1317.0" y="261.5">D11</text>
<text x="1481.4" y="265.8">D1</text>
<text x="1480.4" y="311.0">D13</text>
<text x="1317.0" y="327.2">D12</text>
<text x="1318.7" y="351.2">D11</text>
<text x="1483.1" y="355.3">D1</text>
<text x="1483.1" y="386.2">D4</text>
<text x="1318.7" y="408.5">D10</text>
<text x="1303.6" y="460.4">D9</text>
<text x="1487.8" y="441.3">D3</text>
<text x="1487.8" y="464.4">D2</text>
<text x="1302.1" y="513.4">D9</text>
<text x="1486.3" y="494.3">D3</text>
<text x="1486.3" y="517.4">D2</text>
<text x="1533.2" y="886.0">C30</text>
<text x="1533.2" y="935.4">C31</text>
<text x="1297.1" y="927.4">C1</text>
<text x="1537.0" y="958.4">C30</text>
<text x="1537.0" y="1007.6">C31</text>
<text x="1300.9" y="999.6">C1</text>
<text x="1378.9" y="606.8">P</text>
<text x="1453.1" y="606.8">P1</text>
<text x="1453.1" y="631.4">P4</text>
<text x="1378.9" y="631.4">P3</text>
<text x="1415.8" y="631.4">P5</text>
<text x="1492.6" y="606.8">P</text>
<text x="1566.6" y="606.8">P1</text>
<text x="1566.6" y="631.4">P4</text>
<text x="1492.6" y="631.4">P3</text>
<text x="1380.5" y="684.3">P6</text>
<text x="1454.4" y="684.3">P7</text>
<text x="1380.5" y="709.0">P</text>
<text x="1454.4" y="709.0">P1</text>
<text x="1380.5" y="815.5">P5</text>
<text x="1454.4" y="815.5">P3</text>
<text x="1417.3" y="824.0">P4</text>
<text x="1492.6" y="687.7">P6</text>
<text x="1566.6" y="687.7">P7</text>
<text x="1492.6" y="819.1">P5</text>
<text x="1566.6" y="819.1">P2</text>
<text x="1301.9" y="1072.4">E2</text>
<text x="1426.7" y="1072.4">E3</text>
<text x="1426.7" y="1096.7">E4</text>
<text x="1301.9" y="1100.7">E</text>
<text x="1453.3" y="1056.5">E</text>
<text x="1578.4" y="1052.5">E4</text>
<text x="1578.4" y="1077.2">E5</text>
<text x="1602.9" y="1077.2">E6</text>
<text x="1615.3" y="1089.2">E9</text>
<text x="1602.9" y="1101.7">E7</text>
<text x="1453.3" y="1101.7">E1</text>
<text x="474" y="878">A38</text>
<text x="438" y="969">A49</text>
<text x="483" y="974">A50</text>
<text x="996" y="1063">C25</text>
<text x="1279.5" y="884">C14</text>
<text x="1282" y="957">C14</text>
<text x="1279" y="469">D8</text>
<text x="1278" y="521">D8</text>
</g>
<path d="M231,423.5 L246.5,416.5" stroke="#b5b5b5" stroke-width="0.6"/>
<path d="M450,970 L467,982" stroke="#b5b5b5" stroke-width="0.6"/>
<path d="M483,971 L469.5,982" stroke="#b5b5b5" stroke-width="0.6"/>
<path d="M1004,1064 L1014,1071" stroke="#b5b5b5" stroke-width="0.6"/>
<path d="M1286,467 L1299,470.5" stroke="#b5b5b5" stroke-width="0.6"/>
<path d="M1285,519 L1297.5,523.5" stroke="#b5b5b5" stroke-width="0.6"/>
<path d="M940.5,1038.8 L945,1039.7" stroke="#b5b5b5" stroke-width="0.6"/>
<path d="M977.5,1038.8 L982.5,1039.7" stroke="#b5b5b5" stroke-width="0.6"/>
<path d="M1010.5,948.5 L1015,949" stroke="#b5b5b5" stroke-width="0.6"/>
<path d="M1108.5,506.5 L1113.5,508.5" stroke="#b5b5b5" stroke-width="0.6"/>
<text x="577" y="995" font-family="Liberation Serif" font-size="6.5" fill="#555">Hemline</text>
<g stroke="#f2188c" stroke-width="1.3" fill="none"><path d="M655.3,278 L686.3,278 M676,270.8 L686.3,278 L676,285.2"/><path d="M661,272.3 L661,302.8 M653.8,293 L661,302.8 L668.2,293"/><path d="M687,274 L693.5,282.6 M693.5,274 L687,282.6"/><path d="M657.5,306.4 L661,311 L664.3,306.4 M661,311 L661,315.7"/></g>
</g>
</svg>
<div class="abs" style="left:1634px;top:216px;width:1px;height:925px;background:#9a9a9a"></div>
<div class="abs" style="left:1645px;top:216px;width:11px;height:923px;background:#ececec;border-radius:0 0 0 5px"></div>
<div class="abs" style="left:1635px;top:518px;width:21px;height:325px;border:1px solid #cfcfcf;border-radius:8px;background:#f8f8f8"></div>
<div class="abs" style="left:1635px;top:518px;width:21px;height:106px;border:1px solid #cfcfcf;border-bottom:none;border-radius:8px 8px 0 0;background:#e3e3e3"></div>
<div class="abs" style="left:1636px;top:738px;width:19px;height:1px;background:#d6d6d6"></div>
<div class="abs" style="left:1586px;top:561px;width:120px;height:14px;line-height:14px;text-align:center;font-size:13px;color:#262626;transform:rotate(-90deg)">Pattern Pieces</div>
<div class="abs" style="left:1586px;top:673.5px;width:120px;height:14px;line-height:14px;text-align:center;font-size:13px;color:#262626;transform:rotate(-90deg)">Property Editor</div>
<div class="abs" style="left:1586px;top:783.7px;width:120px;height:14px;line-height:14px;text-align:center;font-size:13px;color:#262626;transform:rotate(-90deg)">Layout Pages</div>
<div class="abs" style="left:1656px;top:216px;width:313px;height:22px;background:linear-gradient(#f1f1f1,#d9d9d9);border-bottom:1px solid #c4c4c4"></div>
<div class="abs" style="left:1656px;top:238px;width:313px;height:903px;background:#f4f4f4"></div>
<div class="abs" style="left:1968px;top:216px;width:1px;height:925px;background:#c2c2c2"></div>
<div class="abs" style="left:1969px;top:0px;width:3px;height:1163px;background:#efefef;border-left:1px solid #b5b5b5"></div>
<svg class="abs" style="left:1961px;top:0" width="11" height="10"><path d="M0,0 H11 V10 H9 Q9,1 0,0 Z" fill="#efefef"/><path d="M0,0.5 Q8.5,1 8.5,10" fill="none" stroke="#c4c4c4" stroke-width="1"/></svg>
<svg class="abs" style="left:1657px;top:218px" width="34" height="16" viewBox="0 0 34 16"><circle cx="8" cy="8" r="7" fill="#4d4d4d"/><path d="M5.3,5.3 L10.7,10.7 M10.7,5.3 L5.3,10.7" stroke="#fff" stroke-width="2.2"/><circle cx="26" cy="8" r="7" fill="#4d4d4d"/><rect x="22.3" y="7.6" width="5.4" height="4" fill="none" stroke="#fff" stroke-width="1.2"/><path d="M24.3,7.6 V5 H29.7 V9.3 H27.7" fill="none" stroke="#fff" stroke-width="1.2"/></svg>
<div class="abs" style="left:1692px;top:220px;width:276px;text-align:center;font-size:11.8px;color:#333">Pattern Pieces</div>
<div class="abs" style="left:1668px;top:250px;width:34px;height:26px;border:1px solid #b9b9b9;background:linear-gradient(#f6f6f6,#e9e9e9)"></div>
<div class="abs" style="left:1703px;top:250px;width:34px;height:26px;border:1px solid #b9b9b9;background:linear-gradient(#f6f6f6,#e9e9e9)"></div>
<div class="abs" style="left:1738px;top:250px;width:34px;height:26px;border:1px solid #b9b9b9;background:linear-gradient(#f6f6f6,#e9e9e9)"></div>
<div class="abs" style="left:1782px;top:250px;width:34px;height:26px;border:1px solid #b9b9b9;background:linear-gradient(#f6f6f6,#e9e9e9)"></div>
<div class="abs" style="left:1817px;top:250px;width:33px;height:26px;border:1px solid #b9b9b9;background:linear-gradient(#f6f6f6,#e9e9e9)"></div>
<div class="abs" style="left:1851px;top:250px;width:34px;height:26px;border:1px solid #b9b9b9;background:linear-gradient(#f6f6f6,#e9e9e9)"></div>
<div class="abs" style="left:1895px;top:250px;width:26px;height:26px;border:1px solid #b9b9b9;background:linear-gradient(#f6f6f6,#e9e9e9)"></div>
<div class="abs" style="left:1931px;top:250px;width:26px;height:26px;border:1px solid #b9b9b9;background:linear-gradient(#f6f6f6,#e9e9e9)"></div>
<div class="abs" style="left:1677px;top:255px"><svg width="16" height="12" viewBox="0 0 16 12"><path d="M0.2,6.6 C2.2,-0.2 13.8,-0.2 15.8,6.6 C13.8,12.6 2.2,12.6 0.2,6.6 Z" fill="#000"/><path d="M2.3,6.7 C4,11.2 12,11.2 13.7,6.7 C12,4 4,4 2.3,6.7Z" fill="#fff"/><circle cx="8" cy="6.1" r="3.2" fill="#000"/><circle cx="6.8" cy="5" r="0.9" fill="#888"/></svg></div>
<svg class="abs" style="left:1712px;top:254px" width="16" height="16" viewBox="0 0 16 16"><path d="M1,4 L6,7.5 L1,11Z M15,4 L10,7.5 L15,11Z" fill="#3f7fd1"/><path d="M8,1 V15" stroke="#9ab" stroke-width="1" stroke-dasharray="2,1.5"/></svg>
<div class="abs" style="left:1747px;top:255px;opacity:.4"><svg width="16" height="12" viewBox="0 0 16 12"><path d="M0.2,6.6 C2.2,-0.2 13.8,-0.2 15.8,6.6 C13.8,12.6 2.2,12.6 0.2,6.6 Z" fill="#777"/><path d="M2.3,6.7 C4,11.2 12,11.2 13.7,6.7 C12,4 4,4 2.3,6.7Z" fill="#fff"/><circle cx="8" cy="6.1" r="3.2" fill="#777"/><circle cx="6.8" cy="5" r="0.9" fill="#888"/></svg></div>
<div class="abs" style="left:1794px;top:255.5px"><svg width="10" height="13" viewBox="0 0 9 12"><path d="M1.6,6 V4.2 A2.9,2.9 0 0 1 7.4,4.2 V6" fill="none" stroke="#000" stroke-width="1.3"/><rect x="0.5" y="5.6" width="8" height="6" fill="#000"/></svg></div>
<svg class="abs" style="left:1825px;top:254px" width="16" height="16" viewBox="0 0 16 16"><path d="M1,4 L6,7.5 L1,11Z M15,4 L10,7.5 L15,11Z" fill="#3f7fd1"/><path d="M8,1 V15" stroke="#9ab" stroke-width="1" stroke-dasharray="2,1.5"/></svg>
<div class="abs" style="left:1863px;top:255.5px"><svg width="10" height="13" viewBox="0 0 9 12"><path d="M1.6,6 V4.2 A2.9,2.9 0 0 1 7.4,4.2 V6" fill="none" stroke="#a0a0a0" stroke-width="1.3"/><rect x="0.5" y="5.6" width="8" height="6" fill="#a0a0a0"/></svg></div>
<svg class="abs" style="left:1899px;top:254px" width="18" height="18" viewBox="0 0 18 18"><path d="M2,16 L11,7" stroke="#2a4f8a" stroke-width="1.6"/><path d="M10,5 L14,1.5 L16.5,4 L13,8Z" fill="#2a5fa8"/><path d="M3,15 L10,8" stroke="#bcd" stroke-width="0.8"/></svg>
<svg class="abs" style="left:1935px;top:254px" width="18" height="18" viewBox="0 0 18 18"><path d="M2.5,15.5 L4,11 L13.5,1.5 L16.5,4.5 L7,14Z" fill="#f2b233" stroke="#9a6a10" stroke-width="0.6"/><path d="M12.5,2.5 L13.5,1.5 L16.5,4.5 L15.5,5.5Z" fill="#e23a2a"/><path d="M2.5,15.5 L4,11 L7,14Z" fill="#f5dcb0"/></svg>
<div class="abs" style="left:1668px;top:286px;width:289px;height:843px;background:#fff;border:1px solid #ababab"></div>
<div class="abs" style="left:1669px;top:287px;width:287px;height:21px;background:#ebebeb"></div>
<div class="abs" style="left:1689px;top:289px;width:1px;height:18px;background:#c4c4c4"></div>
<div class="abs" style="left:1689px;top:308px;width:1px;height:356px;background:#dedede"></div>
<div class="abs" style="left:1710px;top:289px;width:1px;height:18px;background:#c4c4c4"></div>
<div class="abs" style="left:1710px;top:308px;width:1px;height:356px;background:#dedede"></div>
<div class="abs" style="left:1731px;top:289px;width:1px;height:18px;background:#c4c4c4"></div>
<div class="abs" style="left:1731px;top:308px;width:1px;height:356px;background:#dedede"></div>
<div class="abs" style="left:1747px;top:289px;width:1px;height:18px;background:#c4c4c4"></div>
<div class="abs" style="left:1747px;top:308px;width:1px;height:356px;background:#dedede"></div>
<div class="abs" style="left:1669.5px;top:291px;width:20px;text-align:center;font-size:11.5px;color:#222">I</div>
<div class="abs" style="left:1690px;top:291px;width:20px;text-align:center;font-size:11.5px;color:#222">L</div>
<div class="abs" style="left:1711px;top:291px;width:20px;text-align:center;font-size:11.5px;color:#222">C</div>
<div class="abs" style="left:1729.5px;top:291px;width:20px;text-align:center;font-size:11.5px;color:#222">P</div>
<div class="abs" style="left:1752px;top:291px;font-size:11.5px;color:#222">Name</div>
<svg class="abs" style="left:1940px;top:292px" width="10" height="8"><path d="M1.5,6 L5,2.5 L8.5,6" fill="none" stroke="#333" stroke-width="1.3"/></svg>
<div class="abs" style="left:1669px;top:328px;width:287px;height:1px;background:#dedede"></div>
<div class="abs" style="left:1674px;top:310px"><svg width="16" height="12" viewBox="0 0 16 12"><path d="M0.2,6.6 C2.2,-0.2 13.8,-0.2 15.8,6.6 C13.8,12.6 2.2,12.6 0.2,6.6 Z" fill="#000"/><path d="M2.3,6.7 C4,11.2 12,11.2 13.7,6.7 C12,4 4,4 2.3,6.7Z" fill="#fff"/><circle cx="8" cy="6.1" r="3.2" fill="#000"/><circle cx="6.8" cy="5" r="0.9" fill="#888"/></svg></div>
<div class="abs" style="left:1699px;top:310px"><svg width="9" height="12" viewBox="0 0 9 12"><path d="M1.6,6 V4.2 A2.9,2.9 0 0 1 7.4,4.2 V6" fill="none" stroke="#9b9b9b" stroke-width="1.3"/><rect x="0.5" y="5.6" width="8" height="6" fill="#9b9b9b"/></svg></div>
<div class="abs" style="left:1753px;top:312px;font-size:12.7px;color:#000">BackPanel</div>
<div class="abs" style="left:1669px;top:349px;width:287px;height:1px;background:#dedede"></div>
<div class="abs" style="left:1674px;top:331px"><svg width="16" height="12" viewBox="0 0 16 12"><path d="M0.2,6.6 C2.2,-0.2 13.8,-0.2 15.8,6.6 C13.8,12.6 2.2,12.6 0.2,6.6 Z" fill="#000"/><path d="M2.3,6.7 C4,11.2 12,11.2 13.7,6.7 C12,4 4,4 2.3,6.7Z" fill="#fff"/><circle cx="8" cy="6.1" r="3.2" fill="#000"/><circle cx="6.8" cy="5" r="0.9" fill="#888"/></svg></div>
<div class="abs" style="left:1699px;top:331px"><svg width="9" height="12" viewBox="0 0 9 12"><path d="M1.6,6 V4.2 A2.9,2.9 0 0 1 7.4,4.2 V6" fill="none" stroke="#9b9b9b" stroke-width="1.3"/><rect x="0.5" y="5.6" width="8" height="6" fill="#9b9b9b"/></svg></div>
<div class="abs" style="left:1753px;top:333px;font-size:12.7px;color:#000">CollarBase</div>
<div class="abs" style="left:1669px;top:370px;width:287px;height:1px;background:#dedede"></div>
<div class="abs" style="left:1674px;top:352px"><svg width="16" height="12" viewBox="0 0 16 12"><path d="M0.2,6.6 C2.2,-0.2 13.8,-0.2 15.8,6.6 C13.8,12.6 2.2,12.6 0.2,6.6 Z" fill="#000"/><path d="M2.3,6.7 C4,11.2 12,11.2 13.7,6.7 C12,4 4,4 2.3,6.7Z" fill="#fff"/><circle cx="8" cy="6.1" r="3.2" fill="#000"/><circle cx="6.8" cy="5" r="0.9" fill="#888"/></svg></div>
<div class="abs" style="left:1699px;top:352px"><svg width="9" height="12" viewBox="0 0 9 12"><path d="M1.6,6 V4.2 A2.9,2.9 0 0 1 7.4,4.2 V6" fill="none" stroke="#9b9b9b" stroke-width="1.3"/><rect x="0.5" y="5.6" width="8" height="6" fill="#9b9b9b"/></svg></div>
<div class="abs" style="left:1753px;top:354px;font-size:12.7px;color:#000">CollarBaseInterface</div>
<div class="abs" style="left:1669px;top:391px;width:287px;height:1px;background:#dedede"></div>
<div class="abs" style="left:1674px;top:373px"><svg width="16" height="12" viewBox="0 0 16 12"><path d="M0.2,6.6 C2.2,-0.2 13.8,-0.2 15.8,6.6 C13.8,12.6 2.2,12.6 0.2,6.6 Z" fill="#000"/><path d="M2.3,6.7 C4,11.2 12,11.2 13.7,6.7 C12,4 4,4 2.3,6.7Z" fill="#fff"/><circle cx="8" cy="6.1" r="3.2" fill="#000"/><circle cx="6.8" cy="5" r="0.9" fill="#888"/></svg></div>
<div class="abs" style="left:1699px;top:373px"><svg width="9" height="12" viewBox="0 0 9 12"><path d="M1.6,6 V4.2 A2.9,2.9 0 0 1 7.4,4.2 V6" fill="none" stroke="#9b9b9b" stroke-width="1.3"/><rect x="0.5" y="5.6" width="8" height="6" fill="#9b9b9b"/></svg></div>
<div class="abs" style="left:1753px;top:375px;font-size:12.7px;color:#000">CollarTop</div>
<div class="abs" style="left:1669px;top:412px;width:287px;height:1px;background:#dedede"></div>
<div class="abs" style="left:1674px;top:394px"><svg width="16" height="12" viewBox="0 0 16 12"><path d="M0.2,6.6 C2.2,-0.2 13.8,-0.2 15.8,6.6 C13.8,12.6 2.2,12.6 0.2,6.6 Z" fill="#000"/><path d="M2.3,6.7 C4,11.2 12,11.2 13.7,6.7 C12,4 4,4 2.3,6.7Z" fill="#fff"/><circle cx="8" cy="6.1" r="3.2" fill="#000"/><circle cx="6.8" cy="5" r="0.9" fill="#888"/></svg></div>
<div class="abs" style="left:1699px;top:394px"><svg width="9" height="12" viewBox="0 0 9 12"><path d="M1.6,6 V4.2 A2.9,2.9 0 0 1 7.4,4.2 V6" fill="none" stroke="#9b9b9b" stroke-width="1.3"/><rect x="0.5" y="5.6" width="8" height="6" fill="#9b9b9b"/></svg></div>
<div class="abs" style="left:1753px;top:396px;font-size:12.7px;color:#000">CollarTopInterface</div>
<div class="abs" style="left:1669px;top:433px;width:287px;height:1px;background:#dedede"></div>
<div class="abs" style="left:1674px;top:415px"><svg width="16" height="12" viewBox="0 0 16 12"><path d="M0.2,6.6 C2.2,-0.2 13.8,-0.2 15.8,6.6 C13.8,12.6 2.2,12.6 0.2,6.6 Z" fill="#000"/><path d="M2.3,6.7 C4,11.2 12,11.2 13.7,6.7 C12,4 4,4 2.3,6.7Z" fill="#fff"/><circle cx="8" cy="6.1" r="3.2" fill="#000"/><circle cx="6.8" cy="5" r="0.9" fill="#888"/></svg></div>
<div class="abs" style="left:1699px;top:415px"><svg width="9" height="12" viewBox="0 0 9 12"><path d="M1.6,6 V4.2 A2.9,2.9 0 0 1 7.4,4.2 V6" fill="none" stroke="#9b9b9b" stroke-width="1.3"/><rect x="0.5" y="5.6" width="8" height="6" fill="#9b9b9b"/></svg></div>
<div class="abs" style="left:1753px;top:417px;font-size:12.7px;color:#000">Cuff</div>
<div class="abs" style="left:1669px;top:454px;width:287px;height:1px;background:#dedede"></div>
<div class="abs" style="left:1674px;top:436px"><svg width="16" height="12" viewBox="0 0 16 12"><path d="M0.2,6.6 C2.2,-0.2 13.8,-0.2 15.8,6.6 C13.8,12.6 2.2,12.6 0.2,6.6 Z" fill="#000"/><path d="M2.3,6.7 C4,11.2 12,11.2 13.7,6.7 C12,4 4,4 2.3,6.7Z" fill="#fff"/><circle cx="8" cy="6.1" r="3.2" fill="#000"/><circle cx="6.8" cy="5" r="0.9" fill="#888"/></svg></div>
<div class="abs" style="left:1699px;top:436px"><svg width="9" height="12" viewBox="0 0 9 12"><path d="M1.6,6 V4.2 A2.9,2.9 0 0 1 7.4,4.2 V6" fill="none" stroke="#9b9b9b" stroke-width="1.3"/><rect x="0.5" y="5.6" width="8" height="6" fill="#9b9b9b"/></svg></div>
<div class="abs" style="left:1753px;top:438px;font-size:12.7px;color:#000">CuffInterface</div>
<div class="abs" style="left:1669px;top:475px;width:287px;height:1px;background:#dedede"></div>
<div class="abs" style="left:1674px;top:457px"><svg width="16" height="12" viewBox="0 0 16 12"><path d="M0.2,6.6 C2.2,-0.2 13.8,-0.2 15.8,6.6 C13.8,12.6 2.2,12.6 0.2,6.6 Z" fill="#000"/><path d="M2.3,6.7 C4,11.2 12,11.2 13.7,6.7 C12,4 4,4 2.3,6.7Z" fill="#fff"/><circle cx="8" cy="6.1" r="3.2" fill="#000"/><circle cx="6.8" cy="5" r="0.9" fill="#888"/></svg></div>
<div class="abs" style="left:1699px;top:457px"><svg width="9" height="12" viewBox="0 0 9 12"><path d="M1.6,6 V4.2 A2.9,2.9 0 0 1 7.4,4.2 V6" fill="none" stroke="#9b9b9b" stroke-width="1.3"/><rect x="0.5" y="5.6" width="8" height="6" fill="#9b9b9b"/></svg></div>
<div class="abs" style="left:1753px;top:459px;font-size:12.7px;color:#000">FrontPanel</div>
<div class="abs" style="left:1669px;top:496px;width:287px;height:1px;background:#dedede"></div>
<div class="abs" style="left:1674px;top:478px"><svg width="16" height="12" viewBox="0 0 16 12"><path d="M0.2,6.6 C2.2,-0.2 13.8,-0.2 15.8,6.6 C13.8,12.6 2.2,12.6 0.2,6.6 Z" fill="#000"/><path d="M2.3,6.7 C4,11.2 12,11.2 13.7,6.7 C12,4 4,4 2.3,6.7Z" fill="#fff"/><circle cx="8" cy="6.1" r="3.2" fill="#000"/><circle cx="6.8" cy="5" r="0.9" fill="#888"/></svg></div>
<div class="abs" style="left:1699px;top:478px"><svg width="9" height="12" viewBox="0 0 9 12"><path d="M1.6,6 V4.2 A2.9,2.9 0 0 1 7.4,4.2 V6" fill="none" stroke="#9b9b9b" stroke-width="1.3"/><rect x="0.5" y="5.6" width="8" height="6" fill="#9b9b9b"/></svg></div>
<div class="abs" style="left:1753px;top:480px;font-size:12.7px;color:#000">FullSleeve</div>
<div class="abs" style="left:1669px;top:517px;width:287px;height:1px;background:#dedede"></div>
<div class="abs" style="left:1674px;top:499px"><svg width="16" height="12" viewBox="0 0 16 12"><path d="M0.2,6.6 C2.2,-0.2 13.8,-0.2 15.8,6.6 C13.8,12.6 2.2,12.6 0.2,6.6 Z" fill="#000"/><path d="M2.3,6.7 C4,11.2 12,11.2 13.7,6.7 C12,4 4,4 2.3,6.7Z" fill="#fff"/><circle cx="8" cy="6.1" r="3.2" fill="#000"/><circle cx="6.8" cy="5" r="0.9" fill="#888"/></svg></div>
<div class="abs" style="left:1699px;top:499px"><svg width="9" height="12" viewBox="0 0 9 12"><path d="M1.6,6 V4.2 A2.9,2.9 0 0 1 7.4,4.2 V6" fill="none" stroke="#9b9b9b" stroke-width="1.3"/><rect x="0.5" y="5.6" width="8" height="6" fill="#9b9b9b"/></svg></div>
<div class="abs" style="left:1753px;top:501px;font-size:12.7px;color:#000">PlacketTop</div>
<div class="abs" style="left:1669px;top:538px;width:287px;height:1px;background:#dedede"></div>
<div class="abs" style="left:1674px;top:520px"><svg width="16" height="12" viewBox="0 0 16 12"><path d="M0.2,6.6 C2.2,-0.2 13.8,-0.2 15.8,6.6 C13.8,12.6 2.2,12.6 0.2,6.6 Z" fill="#000"/><path d="M2.3,6.7 C4,11.2 12,11.2 13.7,6.7 C12,4 4,4 2.3,6.7Z" fill="#fff"/><circle cx="8" cy="6.1" r="3.2" fill="#000"/><circle cx="6.8" cy="5" r="0.9" fill="#888"/></svg></div>
<div class="abs" style="left:1699px;top:520px"><svg width="9" height="12" viewBox="0 0 9 12"><path d="M1.6,6 V4.2 A2.9,2.9 0 0 1 7.4,4.2 V6" fill="none" stroke="#9b9b9b" stroke-width="1.3"/><rect x="0.5" y="5.6" width="8" height="6" fill="#9b9b9b"/></svg></div>
<div class="abs" style="left:1753px;top:522px;font-size:12.7px;color:#000">PlacketUnder</div>
<div class="abs" style="left:1669px;top:559px;width:287px;height:1px;background:#dedede"></div>
<div class="abs" style="left:1674px;top:541px"><svg width="16" height="12" viewBox="0 0 16 12"><path d="M0.2,6.6 C2.2,-0.2 13.8,-0.2 15.8,6.6 C13.8,12.6 2.2,12.6 0.2,6.6 Z" fill="#000"/><path d="M2.3,6.7 C4,11.2 12,11.2 13.7,6.7 C12,4 4,4 2.3,6.7Z" fill="#fff"/><circle cx="8" cy="6.1" r="3.2" fill="#000"/><circle cx="6.8" cy="5" r="0.9" fill="#888"/></svg></div>
<div class="abs" style="left:1699px;top:541px"><svg width="9" height="12" viewBox="0 0 9 12"><path d="M1.6,6 V4.2 A2.9,2.9 0 0 1 7.4,4.2 V6" fill="none" stroke="#9b9b9b" stroke-width="1.3"/><rect x="0.5" y="5.6" width="8" height="6" fill="#9b9b9b"/></svg></div>
<div class="abs" style="left:1753px;top:543px;font-size:12.7px;color:#000">Pocket</div>
<div class="abs" style="left:1669px;top:580px;width:287px;height:1px;background:#dedede"></div>
<div class="abs" style="left:1674px;top:562px"><svg width="16" height="12" viewBox="0 0 16 12"><path d="M0.2,6.6 C2.2,-0.2 13.8,-0.2 15.8,6.6 C13.8,12.6 2.2,12.6 0.2,6.6 Z" fill="#000"/><path d="M2.3,6.7 C4,11.2 12,11.2 13.7,6.7 C12,4 4,4 2.3,6.7Z" fill="#fff"/><circle cx="8" cy="6.1" r="3.2" fill="#000"/><circle cx="6.8" cy="5" r="0.9" fill="#888"/></svg></div>
<div class="abs" style="left:1699px;top:562px"><svg width="9" height="12" viewBox="0 0 9 12"><path d="M1.6,6 V4.2 A2.9,2.9 0 0 1 7.4,4.2 V6" fill="none" stroke="#9b9b9b" stroke-width="1.3"/><rect x="0.5" y="5.6" width="8" height="6" fill="#9b9b9b"/></svg></div>
<div class="abs" style="left:1753px;top:564px;font-size:12.7px;color:#000">PocketFlap</div>
<div class="abs" style="left:1669px;top:601px;width:287px;height:1px;background:#dedede"></div>
<div class="abs" style="left:1674px;top:583px"><svg width="16" height="12" viewBox="0 0 16 12"><path d="M0.2,6.6 C2.2,-0.2 13.8,-0.2 15.8,6.6 C13.8,12.6 2.2,12.6 0.2,6.6 Z" fill="#000"/><path d="M2.3,6.7 C4,11.2 12,11.2 13.7,6.7 C12,4 4,4 2.3,6.7Z" fill="#fff"/><circle cx="8" cy="6.1" r="3.2" fill="#000"/><circle cx="6.8" cy="5" r="0.9" fill="#888"/></svg></div>
<div class="abs" style="left:1699px;top:583px"><svg width="9" height="12" viewBox="0 0 9 12"><path d="M1.6,6 V4.2 A2.9,2.9 0 0 1 7.4,4.2 V6" fill="none" stroke="#9b9b9b" stroke-width="1.3"/><rect x="0.5" y="5.6" width="8" height="6" fill="#9b9b9b"/></svg></div>
<div class="abs" style="left:1753px;top:585px;font-size:12.7px;color:#000">PocketFlapRound</div>
<div class="abs" style="left:1669px;top:622px;width:287px;height:1px;background:#dedede"></div>
<div class="abs" style="left:1674px;top:604px"><svg width="16" height="12" viewBox="0 0 16 12"><path d="M0.2,6.6 C2.2,-0.2 13.8,-0.2 15.8,6.6 C13.8,12.6 2.2,12.6 0.2,6.6 Z" fill="#000"/><path d="M2.3,6.7 C4,11.2 12,11.2 13.7,6.7 C12,4 4,4 2.3,6.7Z" fill="#fff"/><circle cx="8" cy="6.1" r="3.2" fill="#000"/><circle cx="6.8" cy="5" r="0.9" fill="#888"/></svg></div>
<div class="abs" style="left:1699px;top:604px"><svg width="9" height="12" viewBox="0 0 9 12"><path d="M1.6,6 V4.2 A2.9,2.9 0 0 1 7.4,4.2 V6" fill="none" stroke="#9b9b9b" stroke-width="1.3"/><rect x="0.5" y="5.6" width="8" height="6" fill="#9b9b9b"/></svg></div>
<div class="abs" style="left:1753px;top:606px;font-size:12.7px;color:#000">PocketRound</div>
<div class="abs" style="left:1669px;top:643px;width:287px;height:1px;background:#dedede"></div>
<div class="abs" style="left:1674px;top:625px"><svg width="16" height="12" viewBox="0 0 16 12"><path d="M0.2,6.6 C2.2,-0.2 13.8,-0.2 15.8,6.6 C13.8,12.6 2.2,12.6 0.2,6.6 Z" fill="#000"/><path d="M2.3,6.7 C4,11.2 12,11.2 13.7,6.7 C12,4 4,4 2.3,6.7Z" fill="#fff"/><circle cx="8" cy="6.1" r="3.2" fill="#000"/><circle cx="6.8" cy="5" r="0.9" fill="#888"/></svg></div>
<div class="abs" style="left:1699px;top:625px"><svg width="9" height="12" viewBox="0 0 9 12"><path d="M1.6,6 V4.2 A2.9,2.9 0 0 1 7.4,4.2 V6" fill="none" stroke="#9b9b9b" stroke-width="1.3"/><rect x="0.5" y="5.6" width="8" height="6" fill="#9b9b9b"/></svg></div>
<div class="abs" style="left:1753px;top:627px;font-size:12.7px;color:#000">ShortSleeve</div>
<div class="abs" style="left:1669px;top:664px;width:287px;height:1px;background:#dedede"></div>
<div class="abs" style="left:1674px;top:646px"><svg width="16" height="12" viewBox="0 0 16 12"><path d="M0.2,6.6 C2.2,-0.2 13.8,-0.2 15.8,6.6 C13.8,12.6 2.2,12.6 0.2,6.6 Z" fill="#000"/><path d="M2.3,6.7 C4,11.2 12,11.2 13.7,6.7 C12,4 4,4 2.3,6.7Z" fill="#fff"/><circle cx="8" cy="6.1" r="3.2" fill="#000"/><circle cx="6.8" cy="5" r="0.9" fill="#888"/></svg></div>
<div class="abs" style="left:1699px;top:646px"><svg width="9" height="12" viewBox="0 0 9 12"><path d="M1.6,6 V4.2 A2.9,2.9 0 0 1 7.4,4.2 V6" fill="none" stroke="#9b9b9b" stroke-width="1.3"/><rect x="0.5" y="5.6" width="8" height="6" fill="#9b9b9b"/></svg></div>
<div class="abs" style="left:1753px;top:648px;font-size:12.7px;color:#000">Yoke</div>
<div class="abs" style="left:0;top:1141px;width:1972px;height:1px;background:#8f8f8f"></div>
<div class="abs" style="left:0;top:1142px;width:1969px;height:21px;background:linear-gradient(#f6f6f6,#e3e3e3)"></div>
<div class="abs" style="left:1658px;top:1150px;font-size:9.8px;color:#222">XPos:</div>
<div class="abs" style="left:1760.5px;top:1150px;font-size:9.8px;color:#222">YPos:</div>
<div class="abs" style="left:1861px;top:1150px;font-size:9.8px;color:#222">Units:</div>
<div class="abs" style="left:1692px;top:1147px;width:60px;height:20px;border:1px solid #1a1a1a;background:#f0f0f0;text-align:right;padding-right:3px;font-size:10px;line-height:19px;color:#222">24.72</div>
<div class="abs" style="left:1794px;top:1147px;width:60px;height:20px;border:1px solid #1a1a1a;background:#f0f0f0;text-align:right;padding-right:3px;font-size:10px;line-height:19px;color:#222">103.63</div>
<div class="abs" style="left:1896px;top:1147px;width:30px;height:20px;border:1px solid #1a1a1a;background:#f0f0f0;text-align:right;padding-right:3px;font-size:10px;line-height:19px;color:#222">cm</div>
<div class="abs" style="left:1932px;top:1144px;width:25px;height:20px;border:1px solid #c8c8c8;background:#e6e6e6"></div>
<div class="abs" style="left:1938px;top:1149px;width:14px;height:14px;background:linear-gradient(#4f7fc6,#2c5aa6);border-radius:1px;color:#fff;font:bold 12px 'Liberation Serif';text-align:center;line-height:16px">i</div>
</body></html>
